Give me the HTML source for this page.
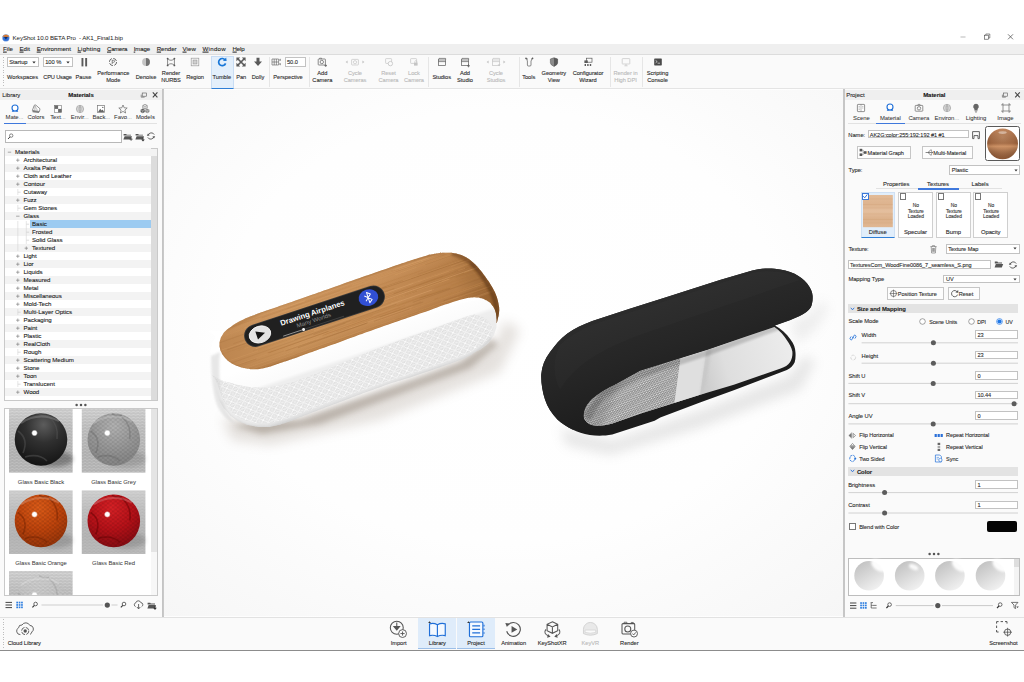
<!DOCTYPE html>
<html lang="en"><head><meta charset="utf-8"><title>KeyShot 10.0 BETA Pro - AK1_Final1.bip</title>
<style>
html,body{margin:0;padding:0;background:#fff;}
body{width:1024px;height:682px;overflow:hidden;position:relative;font-family:"Liberation Sans",sans-serif;font-size:5.7px;color:#2b2b2b;}
.b{position:absolute;box-sizing:border-box;}
.t{position:absolute;white-space:nowrap;line-height:6.8px;text-align:center;letter-spacing:-0.05px;-webkit-text-stroke:0.1px currentColor;}
.g{color:#b9b9b9;}
.bold{font-weight:bold;}
svg{overflow:visible;}
</style></head>
<body>
<!-- title bar -->
<svg class="b" style="left:1.6px;top:33.7px;" width="7.8" height="7.8" viewBox="0 0 9 9">
<circle cx="4.5" cy="4.5" r="4" fill="#2f6fd6"/>
<path d="M0.6 3.6 A4 4 0 0 1 8.4 3.6 L6.6 3.2 L2.4 3.2 Z" fill="#e8791d"/>
<path d="M2.4 3.4 L6.6 3.4 L4.5 6.4 Z" fill="#1b2a55"/>
<circle cx="4.5" cy="4.5" r="4" fill="none" stroke="#9bb8e8" stroke-width="0.4"/>
</svg>
<div class="t " style="left:12.6px;top:37.8px;transform:translate(0,-50%);font-size:6.2px;letter-spacing:-0.109px;color:#1a1a1a;-webkit-text-stroke:0;">KeyShot 10.0 BETA Pro&nbsp; - AK1_Final1.bip</div>
<svg class="b" style="left:958px;top:32px;" width="60" height="10" viewBox="0 0 60 10">
<path d="M2.5 5 H7.5" stroke="#8a8a8a" stroke-width="0.6" fill="none"/>
<rect x="26.5" y="3.2" width="4" height="4" fill="#fff" stroke="#444" stroke-width="0.6"/>
<path d="M27.8 3.2 V2 H31.8 V6 H30.6" fill="none" stroke="#444" stroke-width="0.6"/>
<path d="M50 2.3 L55 7.3 M55 2.3 L50 7.3" stroke="#444" stroke-width="0.7" fill="none"/>
</svg>
<!-- menu bar -->
<div class="b" style="left:0px;top:44px;width:1024px;height:11px;background:#efefef;border-bottom:1px solid #dcdcdc;"></div>
<div class="t " style="left:3px;top:49.2px;transform:translate(0,-50%);font-size:6.1px;letter-spacing:0.043px;color:#222;"><u>F</u>ile</div>
<div class="t " style="left:19.5px;top:49.2px;transform:translate(0,-50%);font-size:6.1px;letter-spacing:-0.003px;color:#222;"><u>E</u>dit</div>
<div class="t " style="left:36.7px;top:49.2px;transform:translate(0,-50%);font-size:6.1px;letter-spacing:0.005px;color:#222;"><u>E</u>nvironment</div>
<div class="t " style="left:77.5px;top:49.2px;transform:translate(0,-50%);font-size:6.1px;letter-spacing:0.204px;color:#222;"><u>L</u>ighting</div>
<div class="t " style="left:107px;top:49.2px;transform:translate(0,-50%);font-size:6.1px;letter-spacing:-0.283px;color:#222;"><u>C</u>amera</div>
<div class="t " style="left:133.7px;top:49.2px;transform:translate(0,-50%);font-size:6.1px;letter-spacing:-0.131px;color:#222;"><u>I</u>mage</div>
<div class="t " style="left:156.7px;top:49.2px;transform:translate(0,-50%);font-size:6.1px;letter-spacing:-0.034px;color:#222;"><u>R</u>ender</div>
<div class="t " style="left:182.5px;top:49.2px;transform:translate(0,-50%);font-size:6.1px;letter-spacing:0.097px;color:#222;"><u>V</u>iew</div>
<div class="t " style="left:202.5px;top:49.2px;transform:translate(0,-50%);font-size:6.1px;letter-spacing:0.301px;color:#222;"><u>W</u>indow</div>
<div class="t " style="left:232.5px;top:49.2px;transform:translate(0,-50%);font-size:6.1px;letter-spacing:-0.136px;color:#222;"><u>H</u>elp</div>
<!-- toolbar -->
<div class="b" style="left:0px;top:55px;width:1024px;height:34px;background:#fafafa;border-bottom:1px solid #e4e4e4;"></div>
<div class="b" style="left:2.5px;top:57px;width:1px;height:30px;background:repeating-linear-gradient(to bottom,#bdbdbd 0,#bdbdbd 1px,transparent 1px,transparent 2.5px);"></div>
<div class="b" style="left:7px;top:57px;width:31.5px;height:10px;background:#fff;border:1px solid #c2c2c2;"></div><div class="t " style="left:9.2px;top:62.2px;transform:translate(0,-50%);font-size:5.8px;">Startup</div><svg class="b" style="left:32.0px;top:60.8px;" width="4" height="3" viewBox="0 0 4 3"><path d="M0.3 0.4 H3.7 L2 2.6 Z" fill="#333"/></svg>
<div class="b" style="left:43px;top:57px;width:29.5px;height:10px;background:#fff;border:1px solid #c2c2c2;"></div><div class="t " style="left:45.2px;top:62.2px;transform:translate(0,-50%);font-size:5.8px;">100 %</div><svg class="b" style="left:66.0px;top:60.8px;" width="4" height="3" viewBox="0 0 4 3"><path d="M0.3 0.4 H3.7 L2 2.6 Z" fill="#333"/></svg>
<div class="t " style="left:22.5px;top:77.3px;transform:translate(-50%,-50%);font-size:5.7px;letter-spacing:-0.026px;">Workspaces</div>
<div class="t " style="left:57.5px;top:77.3px;transform:translate(-50%,-50%);font-size:5.7px;letter-spacing:-0.177px;">CPU Usage</div>
<svg class="b" style="left:77.5px;top:56px;" width="12" height="12" viewBox="0 0 12 12"><rect x="3.5" y="2" width="1.9" height="8.4" fill="#5a5a5a"/><rect x="7.2" y="2" width="1.9" height="8.4" fill="#5a5a5a"/></svg><div class="t " style="left:83.5px;top:77.0px;transform:translate(-50%,-50%);">Pause</div>
<svg class="b" style="left:107.3px;top:56px;" width="12" height="12" viewBox="0 0 12 12"><circle cx="6" cy="6" r="3.6" fill="none" stroke="#5a5a5a" stroke-width="0.9" stroke-dasharray="4.2 1.4"/><path d="M5 4.3 H6.6 A1 1 0 0 1 6.6 6.3 H5.3 M5.2 4.3 V8" fill="none" stroke="#5a5a5a" stroke-width="0.7"/></svg><div class="t " style="left:113.3px;top:73.4px;transform:translate(-50%,-50%);">Performance</div><div class="t " style="left:113.3px;top:80.1px;transform:translate(-50%,-50%);">Mode</div>
<svg class="b" style="left:140px;top:56px;" width="12" height="12" viewBox="0 0 12 12"><circle cx="6" cy="6" r="3.9" fill="#c4c4c4"/><path d="M6 2.1 A3.9 3.9 0 0 1 6 9.9 Z" fill="#727272"/></svg><div class="t " style="left:146px;top:77.0px;transform:translate(-50%,-50%);">Denoise</div>
<svg class="b" style="left:165px;top:56px;" width="12" height="12" viewBox="0 0 12 12"><path d="M2.6 2.6 Q6 6 9.4 2.6 M2.6 9.4 Q6 6 9.4 9.4 M2.6 2.6 V9.4 M9.4 2.6 V9.4" fill="none" stroke="#5a5a5a" stroke-width="0.7"/><circle cx="2.6" cy="2.6" r="0.9" fill="#5a5a5a"/><circle cx="9.4" cy="2.6" r="0.9" fill="#5a5a5a"/><circle cx="2.6" cy="9.4" r="0.9" fill="#5a5a5a"/><circle cx="9.4" cy="9.4" r="0.9" fill="#5a5a5a"/></svg><div class="t " style="left:171px;top:73.4px;transform:translate(-50%,-50%);">Render</div><div class="t " style="left:171px;top:80.1px;transform:translate(-50%,-50%);">NURBS</div>
<svg class="b" style="left:189px;top:56px;" width="12" height="12" viewBox="0 0 12 12"><rect x="2.2" y="2.2" width="7.6" height="7.6" fill="none" stroke="#9a9a9a" stroke-width="0.7"/><rect x="4" y="4" width="4" height="4" fill="#cfcfcf" stroke="#8a8a8a" stroke-width="0.5"/></svg><div class="t " style="left:195px;top:77.0px;transform:translate(-50%,-50%);">Region</div>
<div class="b" style="left:210.5px;top:56px;width:23.2px;height:32.5px;background:#e3effb;border:0.8px solid #c9ddf4;border-bottom:1.3px solid #2f7fd6;"></div>
<svg class="b" style="left:215.8px;top:56px;" width="12" height="12" viewBox="0 0 12 12"><path d="M9.3 4.2 A3.6 3.6 0 1 0 9.6 7.4" fill="none" stroke="#1877d8" stroke-width="1.7"/><path d="M6.9 4.7 L10.6 4.9 L10.2 1.4 Z" fill="#1877d8"/></svg><div class="t " style="left:221.8px;top:77.0px;transform:translate(-50%,-50%);">Tumble</div>
<svg class="b" style="left:235.2px;top:56px;" width="12" height="12" viewBox="0 0 12 12"><path d="M3 3 L9 9 M9 3 L3 9" stroke="#5a5a5a" stroke-width="1.7"/><path d="M1.4 1.4 H5.2 L1.4 5.2 Z M10.6 1.4 V5.2 L6.8 1.4 Z M1.4 10.6 V6.8 L5.2 10.6 Z M10.6 10.6 H6.8 L10.6 6.8 Z" fill="#5a5a5a"/></svg><div class="t " style="left:241.2px;top:77.0px;transform:translate(-50%,-50%);">Pan</div>
<svg class="b" style="left:252px;top:56px;" width="12" height="12" viewBox="0 0 12 12"><path d="M4.5 1.8 H7.5 V5.6 H10 L6 10 L2 5.6 H4.5 Z" fill="#5a5a5a"/></svg><div class="t " style="left:258px;top:77.0px;transform:translate(-50%,-50%);">Dolly</div>
<div class="b" style="left:269px;top:57px;width:1px;height:30px;background:#e6e6e6;"></div>
<svg class="b" style="left:270px;top:56px;" width="12" height="12" viewBox="0 0 12 12"><path d="M2 3 H8.6 V9 H2 Z M2 6 H8.6 M4.2 3 V9 M6.4 3 V9" fill="none" stroke="#5a5a5a" stroke-width="0.6"/><path d="M9.2 7.6 H11 L10.1 9.4 Z M9.2 4.4 H11 L10.1 2.6 Z" fill="#5a5a5a"/></svg>
<div class="b" style="left:285px;top:57.3px;width:21.3px;height:9.6px;background:#fff;border:1px solid #c2c2c2;"></div>
<div class="t " style="left:287px;top:62.3px;transform:translate(0,-50%);">50.0</div>
<div class="t " style="left:288px;top:77.3px;transform:translate(-50%,-50%);font-size:5.7px;letter-spacing:-0.025px;">Perspective</div>
<div class="b" style="left:308.5px;top:57px;width:1px;height:30px;background:#e6e6e6;"></div>
<svg class="b" style="left:316.3px;top:56px;" width="12" height="12" viewBox="0 0 12 12"><rect x="2.2" y="3" width="7.2" height="6" rx="0.6" fill="none" stroke="#5a5a5a" stroke-width="0.7"/><circle cx="5.8" cy="6" r="1.7" fill="none" stroke="#5a5a5a" stroke-width="0.7"/><path d="M3.6 3 V2.2 H5.6 V3" fill="none" stroke="#5a5a5a" stroke-width="0.6"/><path d="M8.4 9.6 H11 M9.7 8.3 V10.9" stroke="#5a5a5a" stroke-width="0.8"/></svg><div class="t " style="left:322.3px;top:73.4px;transform:translate(-50%,-50%);">Add</div><div class="t " style="left:322.3px;top:80.1px;transform:translate(-50%,-50%);">Camera</div>
<svg class="b" style="left:349px;top:56px;" width="12" height="12" viewBox="0 0 12 12"><rect x="2.6" y="3.4" width="6.8" height="5.6" rx="0.6" fill="none" stroke="#c4c4c4" stroke-width="0.7"/><circle cx="6" cy="6.2" r="1.6" fill="none" stroke="#c4c4c4" stroke-width="0.7"/><path d="M-3.4 6 L-1.4 4.6 V7.4 Z M15.4 6 L13.4 4.6 V7.4 Z" fill="#c4c4c4"/></svg><div class="t g" style="left:355px;top:73.4px;transform:translate(-50%,-50%);">Cycle</div><div class="t g" style="left:355px;top:80.1px;transform:translate(-50%,-50%);">Cameras</div>
<svg class="b" style="left:382.5px;top:56px;" width="12" height="12" viewBox="0 0 12 12"><rect x="2.6" y="2.6" width="6" height="4.8" rx="0.6" fill="none" stroke="#c4c4c4" stroke-width="0.7"/><circle cx="7.4" cy="7.6" r="2.2" fill="#fafafa" stroke="#c4c4c4" stroke-width="0.8"/></svg><div class="t g" style="left:388.5px;top:73.4px;transform:translate(-50%,-50%);">Reset</div><div class="t g" style="left:388.5px;top:80.1px;transform:translate(-50%,-50%);">Camera</div>
<svg class="b" style="left:408px;top:56px;" width="12" height="12" viewBox="0 0 12 12"><rect x="2.6" y="2.6" width="6" height="4.8" rx="0.6" fill="none" stroke="#c4c4c4" stroke-width="0.7"/><rect x="6" y="6.6" width="3.6" height="3" fill="#c4c4c4"/><path d="M6.8 6.6 V5.6 A1 1 0 0 1 8.8 5.6 V6.6" fill="none" stroke="#c4c4c4" stroke-width="0.6"/></svg><div class="t g" style="left:414px;top:73.4px;transform:translate(-50%,-50%);">Lock</div><div class="t g" style="left:414px;top:80.1px;transform:translate(-50%,-50%);">Camera</div>
<div class="b" style="left:428px;top:57px;width:1px;height:30px;background:#e6e6e6;"></div>
<svg class="b" style="left:435.7px;top:56px;" width="12" height="12" viewBox="0 0 12 12"><rect x="2.4" y="4" width="7.2" height="5.6" fill="none" stroke="#5a5a5a" stroke-width="0.7"/><path d="M2.4 4 L3 2.4 L9.6 2.4 L9.6 4 M2.4 5.6 H9.6" fill="none" stroke="#5a5a5a" stroke-width="0.7"/></svg><div class="t " style="left:441.7px;top:77.0px;transform:translate(-50%,-50%);">Studios</div>
<svg class="b" style="left:459px;top:56px;" width="12" height="12" viewBox="0 0 12 12"><rect x="2.4" y="4" width="7.2" height="5.6" fill="none" stroke="#5a5a5a" stroke-width="0.7"/><path d="M2.4 4 L3 2.4 L9.6 2.4 L9.6 4 M2.4 5.6 H9.6" fill="none" stroke="#5a5a5a" stroke-width="0.7"/><path d="M8 9.8 H11 M9.5 8.3 V11.3" stroke="#5a5a5a" stroke-width="0.8"/></svg><div class="t " style="left:465px;top:73.4px;transform:translate(-50%,-50%);">Add</div><div class="t " style="left:465px;top:80.1px;transform:translate(-50%,-50%);">Studio</div>
<svg class="b" style="left:490px;top:56px;" width="12" height="12" viewBox="0 0 12 12"><rect x="2.4" y="4" width="7.2" height="5.6" fill="none" stroke="#c4c4c4" stroke-width="0.7"/><path d="M2.4 4 L3 2.4 L9.6 2.4 L9.6 4 M2.4 5.6 H9.6" fill="none" stroke="#c4c4c4" stroke-width="0.7"/><path d="M-3.4 6 L-1.4 4.6 V7.4 Z M15.4 6 L13.4 4.6 V7.4 Z" fill="#c4c4c4"/><path d="M7.6 8.4 H10.6 L9.1 10.2 Z" fill="#c4c4c4"/></svg><div class="t g" style="left:496px;top:73.4px;transform:translate(-50%,-50%);">Cycle</div><div class="t g" style="left:496px;top:80.1px;transform:translate(-50%,-50%);">Studios</div>
<div class="b" style="left:518.5px;top:57px;width:1px;height:30px;background:#e6e6e6;"></div>
<svg class="b" style="left:522.7px;top:56px;" width="12" height="12" viewBox="0 0 12 12"><path d="M3.4 2.6 L4.4 5 V9 A1 1 0 0 0 5.4 10 H7 A1 1 0 0 0 8 9 V5 L9.4 2.6 M3 2.4 L5 3.2 M9.8 2.2 L8 3.2" fill="none" stroke="#5a5a5a" stroke-width="0.7"/><circle cx="3" cy="2.4" r="0.8" fill="#5a5a5a"/><circle cx="9.6" cy="2.4" r="0.8" fill="#5a5a5a"/></svg><div class="t " style="left:528.7px;top:77.0px;transform:translate(-50%,-50%);">Tools</div>
<svg class="b" style="left:547.8px;top:56px;" width="12" height="12" viewBox="0 0 12 12"><path d="M6 1.8 L9.6 3 V6.6 Q9.6 9 6 10.4 Q2.4 9 2.4 6.6 V3 Z" fill="#8c8c8c" stroke="#5a5a5a" stroke-width="0.6"/><path d="M6 1.8 L9.6 3 V6.6 Q9.6 9 6 10.4 Z" fill="#5a5a5a"/></svg><div class="t " style="left:553.8px;top:73.4px;transform:translate(-50%,-50%);">Geometry</div><div class="t " style="left:553.8px;top:80.1px;transform:translate(-50%,-50%);">View</div>
<svg class="b" style="left:582px;top:56px;" width="12" height="12" viewBox="0 0 12 12"><rect x="4.6" y="2.2" width="5.4" height="4" fill="none" stroke="#5a5a5a" stroke-width="0.7"/><rect x="2.4" y="4.4" width="3.4" height="2.6" fill="#5a5a5a"/><path d="M2.6 8 H4 V10 H2.6 Z M5.2 8 H6.6 V10 H5.2 Z M7.8 8 H9.2 V10 H7.8 Z" fill="#5a5a5a"/></svg><div class="t " style="left:588px;top:73.4px;transform:translate(-50%,-50%);">Configurator</div><div class="t " style="left:588px;top:80.1px;transform:translate(-50%,-50%);">Wizard</div>
<div class="b" style="left:610px;top:57px;width:1px;height:30px;background:#e6e6e6;"></div>
<svg class="b" style="left:619.5px;top:56px;" width="12" height="12" viewBox="0 0 12 12"><rect x="2.2" y="2.6" width="7.6" height="5.4" rx="0.5" fill="none" stroke="#c4c4c4" stroke-width="0.7"/><path d="M4.4 9.8 H7.6 M6 8 V9.8" stroke="#c4c4c4" stroke-width="0.7"/></svg><div class="t g" style="left:625.5px;top:73.4px;transform:translate(-50%,-50%);">Render in</div><div class="t g" style="left:625.5px;top:80.1px;transform:translate(-50%,-50%);">High DPI</div>
<div class="b" style="left:642px;top:57px;width:1px;height:30px;background:#e6e6e6;"></div>
<svg class="b" style="left:651.5px;top:56px;" width="12" height="12" viewBox="0 0 12 12"><rect x="2.2" y="2.4" width="7.6" height="7" rx="0.6" fill="#4a4a4a"/><path d="M3.6 4.4 L5.2 5.6 L3.6 6.8 M5.6 7.2 H8" stroke="#fff" stroke-width="0.6" fill="none"/></svg><div class="t " style="left:657.5px;top:73.4px;transform:translate(-50%,-50%);">Scripting</div><div class="t " style="left:657.5px;top:80.1px;transform:translate(-50%,-50%);">Console</div>
<!-- library panel -->
<div class="b" style="left:0px;top:89px;width:162px;height:528px;background:#fafafa;"></div>
<div class="b" style="left:161.5px;top:89px;width:2.2px;height:528px;background:#c4c4c4;"></div>
<div class="b" style="left:0px;top:89.5px;width:161.5px;height:10.5px;background:#efefef;"></div>
<div class="t " style="left:2.3px;top:95.2px;transform:translate(0,-50%);font-size:6px;">Library</div>
<div class="t bold" style="left:81px;top:95.2px;transform:translate(-50%,-50%);font-size:6px;color:#111;">Materials</div>
<svg class="b" style="left:140px;top:90px;" width="20" height="10" viewBox="0 0 20 10">
<rect x="2.2" y="3" width="4.2" height="3.2" fill="none" stroke="#555" stroke-width="0.6"/>
<path d="M1.2 4.6 V7.2 H4.6" fill="none" stroke="#555" stroke-width="0.6"/>
<path d="M12.8 2.4 L17.4 7.4 M17.4 2.4 L12.8 7.4" stroke="#444" stroke-width="1.1" fill="none"/>
</svg>
<svg class="b" style="left:8.5px;top:102.6px;" width="12" height="12" viewBox="0 0 12 12"><circle cx="6" cy="5" r="3" fill="#fff" stroke="#1f6fd8" stroke-width="1.1"/><path d="M3.2 7.6 Q6 9.2 8.8 7.6 L9.2 8.8 H2.8 Z" fill="#1f6fd8"/></svg>
<div class="t " style="left:14.5px;top:117.4px;transform:translate(-50%,-50%);font-size:5.95px;-webkit-text-stroke:0.04px currentColor;color:#333;">Mate<span style="color:#999">...</span></div>
<svg class="b" style="left:29.9px;top:102.6px;" width="12" height="12" viewBox="0 0 12 12"><path d="M2.4 7.4 L4.2 2.4 Q4.9 1.5 5.8 2.1 L10 5.8 L9.4 8.6 Z" fill="#fff" stroke="#666" stroke-width="0.7"/><path d="M2.4 7.4 L9.4 8.6 L8.8 10 L2.6 9.2 Z" fill="#7c7c7c"/><path d="M4.8 2.4 L4.4 7.7 M4.8 2.4 L6.4 8 M4.8 2.4 L8.2 8.3" stroke="#999" stroke-width="0.45"/></svg>
<div class="t " style="left:35.9px;top:117.4px;transform:translate(-50%,-50%);font-size:5.95px;-webkit-text-stroke:0.04px currentColor;color:#333;">Colors</div>
<svg class="b" style="left:51.9px;top:102.6px;" width="12" height="12" viewBox="0 0 12 12"><rect x="2.6" y="2.4" width="7" height="7" fill="#fff" stroke="#777" stroke-width="0.6"/><rect x="2.6" y="2.4" width="3.5" height="3.5" fill="#6a6a6a"/><rect x="6.1" y="5.9" width="3.5" height="3.5" fill="#6a6a6a"/></svg>
<div class="t " style="left:57.9px;top:117.4px;transform:translate(-50%,-50%);font-size:5.95px;-webkit-text-stroke:0.04px currentColor;color:#333;">Text<span style="color:#999">...</span></div>
<svg class="b" style="left:73.7px;top:102.6px;" width="12" height="12" viewBox="0 0 12 12"><circle cx="6" cy="6" r="3.7" fill="#e6e6e6" stroke="#9a9a9a" stroke-width="0.6"/><path d="M2.4 6 H9.6 M3 4.2 H9 M3 7.8 H9 M6 2.3 V9.7 M6 2.3 Q3.6 6 6 9.7 M6 2.3 Q8.4 6 6 9.7" fill="none" stroke="#9a9a9a" stroke-width="0.45"/></svg>
<div class="t " style="left:79.7px;top:117.4px;transform:translate(-50%,-50%);font-size:5.95px;-webkit-text-stroke:0.04px currentColor;color:#333;">Envir<span style="color:#999">...</span></div>
<svg class="b" style="left:95.3px;top:102.6px;" width="12" height="12" viewBox="0 0 12 12"><rect x="2.4" y="2.6" width="7.2" height="6.8" fill="#fff" stroke="#777" stroke-width="0.7"/><path d="M3 9 L5.2 5.8 L6.6 7.6 L7.6 6.6 L9.2 9 Z" fill="#666"/><circle cx="7.8" cy="4.4" r="0.7" fill="#666"/></svg>
<div class="t " style="left:101.3px;top:117.4px;transform:translate(-50%,-50%);font-size:5.95px;-webkit-text-stroke:0.04px currentColor;color:#333;">Back<span style="color:#999">...</span></div>
<svg class="b" style="left:117px;top:102.6px;" width="12" height="12" viewBox="0 0 12 12"><path d="M6 2 L7.2 4.8 L10.2 5 L7.9 7 L8.6 10 L6 8.4 L3.4 10 L4.1 7 L1.8 5 L4.8 4.8 Z" fill="none" stroke="#666" stroke-width="0.7"/></svg>
<div class="t " style="left:123px;top:117.4px;transform:translate(-50%,-50%);font-size:5.95px;-webkit-text-stroke:0.04px currentColor;color:#333;">Favo<span style="color:#999">...</span></div>
<svg class="b" style="left:139.4px;top:102.6px;" width="12" height="12" viewBox="0 0 12 12"><path d="M6 1.4 L8.2 2.5 V4.9 L6 6 L3.8 4.9 V2.5 Z" fill="#f2f2f2" stroke="#666" stroke-width="0.6"/><path d="M3.8 2.5 L6 3.6 L8.2 2.5 M6 3.6 V6" fill="none" stroke="#777" stroke-width="0.45"/><path d="M3.7 5.6 L5.8 6.7 V9.1 L3.7 10.2 L1.6 9.1 V6.7 Z" fill="#5e5e5e"/><path d="M8.3 5.6 L10.4 6.7 V9.1 L8.3 10.2 L6.2 9.1 V6.7 Z" fill="#8c8c8c"/><path d="M1.6 6.7 L3.7 7.8 L5.8 6.7 M3.7 7.8 V10.2 M6.2 6.7 L8.3 7.8 L10.4 6.7 M8.3 7.8 V10.2" fill="none" stroke="#e8e8e8" stroke-width="0.4"/></svg>
<div class="t " style="left:145.4px;top:117.4px;transform:translate(-50%,-50%);font-size:5.95px;-webkit-text-stroke:0.04px currentColor;color:#333;">Models</div>
<div class="b" style="left:4px;top:122.6px;width:152.5px;height:1.1px;background:#e2e2e2;"></div>
<div class="b" style="left:4px;top:122.5px;width:21.7px;height:1.3px;background:#3f78dc;"></div>
<div class="b" style="left:5.2px;top:130.3px;width:116.5px;height:12.3px;background:#fff;border:1px solid #b8b8b8;"></div>
<svg class="b" style="left:7px;top:132.8px;" width="7" height="7" viewBox="0 0 7 7"><circle cx="4.2" cy="2.6" r="1.7" fill="#fff" stroke="#555" stroke-width="0.7"/><path d="M3 3.9 L1 6" stroke="#444" stroke-width="1"/></svg>
<svg class="b" style="left:123.2px;top:131.6px;" width="10" height="10" viewBox="0 0 10 10"><path d="M0.6 2 H3.2 L3.8 2.8 H8 V3.6 H0.6 Z" fill="#555"/><path d="M1.6 4.2 H9 L7.6 7.6 H0.4 Z" fill="#555"/><path d="M6.6 7.2 H9.6 M8.1 5.8 V8.8" stroke="#444" stroke-width="0.8"/></svg>
<svg class="b" style="left:134.7px;top:131.6px;" width="10" height="10" viewBox="0 0 10 10"><path d="M0.6 2 H3.2 L3.8 2.8 H8 V3.6 H0.6 Z" fill="#555"/><path d="M1.6 4.2 H9 L7.6 7.6 H0.4 Z" fill="#555"/><path d="M6.2 7.4 H9.8 L8 9.6 Z" fill="#333"/><path d="M8 5.4 V8" stroke="#333" stroke-width="0.9"/></svg>
<svg class="b" style="left:146px;top:131.2px;" width="10" height="10" viewBox="0 0 10 10"><path d="M8.2 3.6 A3.2 3.2 0 0 0 2.2 4.4 M1.8 6.4 A3.2 3.2 0 0 0 7.8 5.6" fill="none" stroke="#555" stroke-width="0.9"/><path d="M0.8 4.8 L3.6 4.6 L2 2.6 Z M9.2 5.2 L6.4 5.4 L8 7.4 Z" fill="#555"/></svg>
<div class="b" style="left:4.4px;top:147.5px;width:153.5px;height:253.5px;background:#fff;border:1px solid #c9c9c9;"></div>
<div class="b" style="left:5.4px;top:148.2px;width:145.8px;height:8px;background:#f3f3f3;"></div><div class="t " style="left:15px;top:152.29999999999998px;transform:translate(0,-50%);font-size:6.15px;color:#222;">Materials</div><div class="t " style="left:23.5px;top:160.29999999999998px;transform:translate(0,-50%);font-size:6.15px;color:#222;">Architectural</div><div class="b" style="left:5.4px;top:164.2px;width:145.8px;height:8px;background:#f3f3f3;"></div><div class="t " style="left:23.5px;top:168.29999999999998px;transform:translate(0,-50%);font-size:6.15px;color:#222;">Axalta Paint</div><div class="t " style="left:23.5px;top:176.29999999999998px;transform:translate(0,-50%);font-size:6.15px;color:#222;">Cloth and Leather</div><div class="b" style="left:5.4px;top:180.2px;width:145.8px;height:8px;background:#f3f3f3;"></div><div class="t " style="left:23.5px;top:184.29999999999998px;transform:translate(0,-50%);font-size:6.15px;color:#222;">Contour</div><div class="t " style="left:23.5px;top:192.29999999999998px;transform:translate(0,-50%);font-size:6.15px;color:#222;">Cutaway</div><div class="b" style="left:5.4px;top:196.2px;width:145.8px;height:8px;background:#f3f3f3;"></div><div class="t " style="left:23.5px;top:200.29999999999998px;transform:translate(0,-50%);font-size:6.15px;color:#222;">Fuzz</div><div class="t " style="left:23.5px;top:208.29999999999998px;transform:translate(0,-50%);font-size:6.15px;color:#222;">Gem Stones</div><div class="b" style="left:5.4px;top:212.2px;width:145.8px;height:8px;background:#f3f3f3;"></div><div class="t " style="left:23.5px;top:216.29999999999998px;transform:translate(0,-50%);font-size:6.15px;color:#222;">Glass</div><div class="b" style="left:30.4px;top:220.29999999999998px;width:120.8px;height:7.8px;background:#9ccbf1;"></div><div class="t " style="left:32px;top:224.29999999999998px;transform:translate(0,-50%);font-size:6.15px;color:#222;">Basic</div><div class="b" style="left:5.4px;top:228.2px;width:145.8px;height:8px;background:#f3f3f3;"></div><div class="t " style="left:32px;top:232.29999999999998px;transform:translate(0,-50%);font-size:6.15px;color:#222;">Frosted</div><div class="t " style="left:32px;top:240.29999999999998px;transform:translate(0,-50%);font-size:6.15px;color:#222;">Solid Glass</div><div class="b" style="left:5.4px;top:244.2px;width:145.8px;height:8px;background:#f3f3f3;"></div><div class="t " style="left:32px;top:248.29999999999998px;transform:translate(0,-50%);font-size:6.15px;color:#222;">Textured</div><div class="t " style="left:23.5px;top:256.3px;transform:translate(0,-50%);font-size:6.15px;color:#222;">Light</div><div class="b" style="left:5.4px;top:260.2px;width:145.8px;height:8px;background:#f3f3f3;"></div><div class="t " style="left:23.5px;top:264.3px;transform:translate(0,-50%);font-size:6.15px;color:#222;">Lior</div><div class="t " style="left:23.5px;top:272.3px;transform:translate(0,-50%);font-size:6.15px;color:#222;">Liquids</div><div class="b" style="left:5.4px;top:276.2px;width:145.8px;height:8px;background:#f3f3f3;"></div><div class="t " style="left:23.5px;top:280.3px;transform:translate(0,-50%);font-size:6.15px;color:#222;">Measured</div><div class="t " style="left:23.5px;top:288.3px;transform:translate(0,-50%);font-size:6.15px;color:#222;">Metal</div><div class="b" style="left:5.4px;top:292.2px;width:145.8px;height:8px;background:#f3f3f3;"></div><div class="t " style="left:23.5px;top:296.3px;transform:translate(0,-50%);font-size:6.15px;color:#222;">Miscellaneous</div><div class="t " style="left:23.5px;top:304.3px;transform:translate(0,-50%);font-size:6.15px;color:#222;">Mold-Tech</div><div class="b" style="left:5.4px;top:308.2px;width:145.8px;height:8px;background:#f3f3f3;"></div><div class="t " style="left:23.5px;top:312.3px;transform:translate(0,-50%);font-size:6.15px;color:#222;">Multi-Layer Optics</div><div class="t " style="left:23.5px;top:320.3px;transform:translate(0,-50%);font-size:6.15px;color:#222;">Packaging</div><div class="b" style="left:5.4px;top:324.2px;width:145.8px;height:8px;background:#f3f3f3;"></div><div class="t " style="left:23.5px;top:328.3px;transform:translate(0,-50%);font-size:6.15px;color:#222;">Paint</div><div class="t " style="left:23.5px;top:336.3px;transform:translate(0,-50%);font-size:6.15px;color:#222;">Plastic</div><div class="b" style="left:5.4px;top:340.2px;width:145.8px;height:8px;background:#f3f3f3;"></div><div class="t " style="left:23.5px;top:344.3px;transform:translate(0,-50%);font-size:6.15px;color:#222;">RealCloth</div><div class="t " style="left:23.5px;top:352.3px;transform:translate(0,-50%);font-size:6.15px;color:#222;">Rough</div><div class="b" style="left:5.4px;top:356.2px;width:145.8px;height:8px;background:#f3f3f3;"></div><div class="t " style="left:23.5px;top:360.3px;transform:translate(0,-50%);font-size:6.15px;color:#222;">Scattering Medium</div><div class="t " style="left:23.5px;top:368.3px;transform:translate(0,-50%);font-size:6.15px;color:#222;">Stone</div><div class="b" style="left:5.4px;top:372.2px;width:145.8px;height:8px;background:#f3f3f3;"></div><div class="t " style="left:23.5px;top:376.3px;transform:translate(0,-50%);font-size:6.15px;color:#222;">Toon</div><div class="t " style="left:23.5px;top:384.3px;transform:translate(0,-50%);font-size:6.15px;color:#222;">Translucent</div><div class="b" style="left:5.4px;top:388.2px;width:145.8px;height:8px;background:#f3f3f3;"></div><div class="t " style="left:23.5px;top:392.3px;transform:translate(0,-50%);font-size:6.15px;color:#222;">Wood</div>
<svg class="b" style="left:0px;top:0px;" width="162" height="410" viewBox="0 0 162 410"><path d="M7.8 152.2 H11.2" stroke="#808080" stroke-width="0.65"/><path d="M16.1 160.2 H19.5 M17.8 158.5 V161.89999999999998" stroke="#808080" stroke-width="0.65"/><path d="M16.1 168.2 H19.5 M17.8 166.5 V169.89999999999998" stroke="#808080" stroke-width="0.65"/><path d="M16.1 176.2 H19.5 M17.8 174.5 V177.89999999999998" stroke="#808080" stroke-width="0.65"/><path d="M16.1 184.2 H19.5 M17.8 182.5 V185.89999999999998" stroke="#808080" stroke-width="0.65"/><path d="M17.8 192.2 H20.6" stroke="#bdbdbd" stroke-width="0.5"/><path d="M16.1 200.2 H19.5 M17.8 198.5 V201.89999999999998" stroke="#808080" stroke-width="0.65"/><path d="M17.8 208.2 H20.6" stroke="#bdbdbd" stroke-width="0.5"/><path d="M16.1 216.2 H19.5" stroke="#808080" stroke-width="0.65"/><path d="M26.3 224.2 H29.1" stroke="#bdbdbd" stroke-width="0.5"/><path d="M26.3 232.2 H29.1" stroke="#bdbdbd" stroke-width="0.5"/><path d="M26.3 240.2 H29.1" stroke="#bdbdbd" stroke-width="0.5"/><path d="M24.6 248.2 H28.0 M26.3 246.5 V249.89999999999998" stroke="#808080" stroke-width="0.65"/><path d="M16.1 256.2 H19.5 M17.8 254.5 V257.9" stroke="#808080" stroke-width="0.65"/><path d="M16.1 264.2 H19.5 M17.8 262.5 V265.9" stroke="#808080" stroke-width="0.65"/><path d="M16.1 272.2 H19.5 M17.8 270.5 V273.9" stroke="#808080" stroke-width="0.65"/><path d="M16.1 280.2 H19.5 M17.8 278.5 V281.9" stroke="#808080" stroke-width="0.65"/><path d="M16.1 288.2 H19.5 M17.8 286.5 V289.9" stroke="#808080" stroke-width="0.65"/><path d="M16.1 296.2 H19.5 M17.8 294.5 V297.9" stroke="#808080" stroke-width="0.65"/><path d="M16.1 304.2 H19.5 M17.8 302.5 V305.9" stroke="#808080" stroke-width="0.65"/><path d="M17.8 312.2 H20.6" stroke="#bdbdbd" stroke-width="0.5"/><path d="M16.1 320.2 H19.5 M17.8 318.5 V321.9" stroke="#808080" stroke-width="0.65"/><path d="M16.1 328.2 H19.5 M17.8 326.5 V329.9" stroke="#808080" stroke-width="0.65"/><path d="M16.1 336.2 H19.5 M17.8 334.5 V337.9" stroke="#808080" stroke-width="0.65"/><path d="M16.1 344.2 H19.5 M17.8 342.5 V345.9" stroke="#808080" stroke-width="0.65"/><path d="M17.8 352.2 H20.6" stroke="#bdbdbd" stroke-width="0.5"/><path d="M16.1 360.2 H19.5 M17.8 358.5 V361.9" stroke="#808080" stroke-width="0.65"/><path d="M16.1 368.2 H19.5 M17.8 366.5 V369.9" stroke="#808080" stroke-width="0.65"/><path d="M16.1 376.2 H19.5 M17.8 374.5 V377.9" stroke="#808080" stroke-width="0.65"/><path d="M17.8 384.2 H20.6" stroke="#bdbdbd" stroke-width="0.5"/><path d="M16.1 392.2 H19.5 M17.8 390.5 V393.9" stroke="#808080" stroke-width="0.65"/><path d="M17.8 189 V195" stroke="#cfcfcf" stroke-width="0.5"/><path d="M17.8 205 V211" stroke="#cfcfcf" stroke-width="0.5"/><path d="M17.8 221 V251" stroke="#cfcfcf" stroke-width="0.5"/><path d="M26.3 221 V244" stroke="#cfcfcf" stroke-width="0.5"/><path d="M17.8 309 V315" stroke="#cfcfcf" stroke-width="0.5"/><path d="M17.8 349 V355" stroke="#cfcfcf" stroke-width="0.5"/><path d="M17.8 381 V387" stroke="#cfcfcf" stroke-width="0.5"/></svg>
<div class="b" style="left:151.2px;top:148.5px;width:5.7px;height:7.7px;background:#f3f3f3;"></div>
<div class="b" style="left:151.2px;top:156.2px;width:5.7px;height:243.8px;background:#dcdcdc;"></div>
<svg class="b" style="left:74px;top:402.5px;" width="14" height="4" viewBox="0 0 14 4"><circle cx="2.6" cy="2" r="1.25" fill="#555"/><circle cx="7" cy="2" r="1.25" fill="#555"/><circle cx="11.4" cy="2" r="1.25" fill="#555"/></svg>
<!-- thumbnails -->
<div class="b" style="left:4.4px;top:408px;width:153.5px;height:188px;background:#fff;border:1px solid #c9c9c9;"></div>
<div class="b" style="left:151.4px;top:409px;width:5.6px;height:142.5px;background:#e4e4e4;"></div>
<div class="b" style="left:151.4px;top:551.5px;width:5.6px;height:43.5px;background:#f7f7f7;"></div>
<svg class="b" style="left:0px;top:0px;" width="162" height="620" viewBox="0 0 162 620"><defs>
<pattern id="chk" width="4.4" height="3" patternUnits="userSpaceOnUse"><rect width="2.2" height="1.5" fill="#fff" opacity="0.16"/><rect x="2.2" y="1.5" width="2.2" height="1.5" fill="#fff" opacity="0.16"/><path d="M0 0 H4.4 M0 1.5 H4.4" stroke="#888" stroke-width="0.25" opacity="0.5"/></pattern>
<linearGradient id="flr" x1="0" y1="0" x2="0" y2="1"><stop offset="0" stop-color="#cfcfcf"/><stop offset="0.3" stop-color="#bcbcbc"/><stop offset="0.7" stop-color="#b0b0b0"/><stop offset="1" stop-color="#b6b6b6"/></linearGradient>
<radialGradient id="sBlack" cx="0.55" cy="0.22" r="0.85"><stop offset="0" stop-color="#5c5c5c"/><stop offset="0.4" stop-color="#303030"/><stop offset="0.75" stop-color="#1d1d1d"/><stop offset="1" stop-color="#101010"/></radialGradient>
<radialGradient id="sGrey" cx="0.5" cy="0.25" r="0.85"><stop offset="0" stop-color="#b0b0b0"/><stop offset="0.5" stop-color="#939393"/><stop offset="1" stop-color="#7b7b7b"/></radialGradient>
<radialGradient id="sOrange" cx="0.45" cy="0.25" r="0.85"><stop offset="0" stop-color="#dd5c18"/><stop offset="0.5" stop-color="#c0440c"/><stop offset="1" stop-color="#8a3008"/></radialGradient>
<radialGradient id="sRed" cx="0.45" cy="0.25" r="0.85"><stop offset="0" stop-color="#d92126"/><stop offset="0.5" stop-color="#b81118"/><stop offset="1" stop-color="#7a0a10"/></radialGradient>
<radialGradient id="sClear" cx="0.45" cy="0.35" r="0.75"><stop offset="0" stop-color="#dcdcdc"/><stop offset="0.7" stop-color="#c2c2c2"/><stop offset="1" stop-color="#a8a8a8"/></radialGradient>
<radialGradient id="hl" cx="0.5" cy="0.5" r="0.5"><stop offset="0" stop-color="#fff"/><stop offset="0.55" stop-color="#fff"/><stop offset="1" stop-color="#fff" stop-opacity="0"/></radialGradient>
<pattern id="chk2" width="5" height="4" patternUnits="userSpaceOnUse"><rect width="2.5" height="2" fill="#000"/><rect x="2.5" y="2" width="2.5" height="2" fill="#000"/></pattern>
<filter id="tbl" x="-30%" y="-30%" width="160%" height="160%"><feGaussianBlur stdDeviation="2.2"/></filter>
</defs><g transform="translate(9 409)"><rect width="63.6" height="63.6" fill="url(#flr)"/><rect width="63.6" height="63.6" fill="url(#chk)"/><ellipse cx="44" cy="50" rx="20" ry="8" fill="#000" opacity="0.3" filter="url(#tbl)"/><circle cx="32" cy="30.5" r="26.3" fill="url(#sBlack)" fill-opacity="1"/><circle cx="32" cy="30.5" r="26.3" fill="url(#chk2)" opacity="0.0"/><path d="M9 22 Q20 30 14 44 M16 48 Q30 44 38 52 M40 8 Q50 16 48 30 M30 5 Q36 8 40 6" fill="none" stroke="#555" stroke-opacity="0.5" stroke-width="1.6"/><path d="M12 14 Q30 2 50 12" fill="none" stroke="#fff" stroke-opacity="0.18" stroke-width="2.2"/><circle cx="25.5" cy="24" r="3.4" fill="url(#hl)"/></g><g transform="translate(81.8 409)"><rect width="63.6" height="63.6" fill="url(#flr)"/><rect width="63.6" height="63.6" fill="url(#chk)"/><ellipse cx="44" cy="50" rx="20" ry="8" fill="#000" opacity="0.12" filter="url(#tbl)"/><circle cx="32" cy="30.5" r="26.3" fill="url(#sGrey)" fill-opacity="0.9"/><circle cx="32" cy="30.5" r="26.3" fill="url(#chk2)" opacity="0.08"/><path d="M9 22 Q20 30 14 44 M16 48 Q30 44 38 52 M40 8 Q50 16 48 30 M30 5 Q36 8 40 6" fill="none" stroke="#555" stroke-opacity="0.3" stroke-width="1.6"/><path d="M12 14 Q30 2 50 12" fill="none" stroke="#fff" stroke-opacity="0.18" stroke-width="2.2"/><circle cx="25.5" cy="24" r="3.4" fill="url(#hl)"/></g><g transform="translate(9 490.4)"><rect width="63.6" height="63.6" fill="url(#flr)"/><rect width="63.6" height="63.6" fill="url(#chk)"/><ellipse cx="44" cy="50" rx="20" ry="8" fill="#000" opacity="0.14" filter="url(#tbl)"/><circle cx="32" cy="30.5" r="26.3" fill="url(#sOrange)" fill-opacity="1"/><circle cx="32" cy="30.5" r="26.3" fill="url(#chk2)" opacity="0.13"/><path d="M9 22 Q20 30 14 44 M16 48 Q30 44 38 52 M40 8 Q50 16 48 30 M30 5 Q36 8 40 6" fill="none" stroke="#6a2000" stroke-opacity="0.45" stroke-width="1.6"/><path d="M12 14 Q30 2 50 12" fill="none" stroke="#fff" stroke-opacity="0.18" stroke-width="2.2"/><circle cx="25.5" cy="24" r="3.4" fill="url(#hl)"/></g><g transform="translate(81.8 490.4)"><rect width="63.6" height="63.6" fill="url(#flr)"/><rect width="63.6" height="63.6" fill="url(#chk)"/><ellipse cx="44" cy="50" rx="20" ry="8" fill="#000" opacity="0.14" filter="url(#tbl)"/><circle cx="32" cy="30.5" r="26.3" fill="url(#sRed)" fill-opacity="1"/><circle cx="32" cy="30.5" r="26.3" fill="url(#chk2)" opacity="0.13"/><path d="M9 22 Q20 30 14 44 M16 48 Q30 44 38 52 M40 8 Q50 16 48 30 M30 5 Q36 8 40 6" fill="none" stroke="#5a0000" stroke-opacity="0.45" stroke-width="1.6"/><path d="M12 14 Q30 2 50 12" fill="none" stroke="#fff" stroke-opacity="0.18" stroke-width="2.2"/><circle cx="25.5" cy="24" r="3.4" fill="url(#hl)"/></g></svg>
<svg class="b" style="left:9px;top:571.4px;overflow:hidden" width="63.6" height="23.8" viewBox="0 0 63.6 23.8"><g transform="translate(0 0)"><rect width="63.6" height="63.6" fill="url(#flr)"/><rect width="63.6" height="63.6" fill="url(#chk)"/><ellipse cx="44" cy="50" rx="20" ry="8" fill="#000" opacity="0.04" filter="url(#tbl)"/><circle cx="32" cy="30.5" r="26.3" fill="url(#sClear)" fill-opacity="0.35"/><circle cx="32" cy="30.5" r="26.3" fill="url(#chk2)" opacity="0.03"/><path d="M9 22 Q20 30 14 44 M16 48 Q30 44 38 52 M40 8 Q50 16 48 30 M30 5 Q36 8 40 6" fill="none" stroke="#888" stroke-opacity="0.3" stroke-width="1.6"/><path d="M12 14 Q30 2 50 12" fill="none" stroke="#fff" stroke-opacity="0.18" stroke-width="2.2"/><circle cx="25.5" cy="24" r="3.4" fill="url(#hl)"/></g></svg>
<div class="t " style="left:41px;top:482px;transform:translate(-50%,-50%);font-size:5.9px;color:#3a3a3a;-webkit-text-stroke:0.03px currentColor;">Glass Basic Black</div>
<div class="t " style="left:113.5px;top:482px;transform:translate(-50%,-50%);font-size:5.9px;color:#3a3a3a;-webkit-text-stroke:0.03px currentColor;">Glass Basic Grey</div>
<div class="t " style="left:41px;top:563px;transform:translate(-50%,-50%);font-size:5.9px;color:#3a3a3a;-webkit-text-stroke:0.03px currentColor;">Glass Basic Orange</div>
<div class="t " style="left:113.5px;top:563px;transform:translate(-50%,-50%);font-size:5.9px;color:#3a3a3a;-webkit-text-stroke:0.03px currentColor;">Glass Basic Red</div>
<svg class="b" style="left:0px;top:0px;" width="162" height="620" viewBox="0 0 162 620"><path d="M5.5 602.4 H12 M5.5 605 H12 M5.5 607.6 H12" stroke="#444" stroke-width="1"/><rect x="16.3" y="601.7" width="1.7" height="1.7" fill="#2f7fe0"/><rect x="16.3" y="604.1" width="1.7" height="1.7" fill="#2f7fe0"/><rect x="16.3" y="606.5" width="1.7" height="1.7" fill="#2f7fe0"/><rect x="18.7" y="601.7" width="1.7" height="1.7" fill="#2f7fe0"/><rect x="18.7" y="604.1" width="1.7" height="1.7" fill="#2f7fe0"/><rect x="18.7" y="606.5" width="1.7" height="1.7" fill="#2f7fe0"/><rect x="21.1" y="601.7" width="1.7" height="1.7" fill="#2f7fe0"/><rect x="21.1" y="604.1" width="1.7" height="1.7" fill="#2f7fe0"/><rect x="21.1" y="606.5" width="1.7" height="1.7" fill="#2f7fe0"/><circle cx="35.6" cy="604" r="1.8" fill="#fff" stroke="#444" stroke-width="0.8"/><path d="M34.4 605.4 L32.4 607.4" stroke="#333" stroke-width="1.1"/><path d="M41.5 605 H103 M111.5 605 H117.5" stroke="#b4b4b4" stroke-width="0.6"/><circle cx="107.3" cy="605.1" r="2.6" fill="#555"/><circle cx="124" cy="604" r="1.8" fill="#fff" stroke="#444" stroke-width="0.8"/><path d="M122.8 605.4 L120.8 607.4" stroke="#333" stroke-width="1.1"/><path d="M135.6 606.6 A2 2 0 0 1 135.8 602.8 A2.6 2.6 0 0 1 140.8 602.6 A2.1 2.1 0 0 1 141.6 606.6" fill="none" stroke="#444" stroke-width="0.8"/><path d="M138.6 604 V608.6 M136.9 607 L138.6 608.9 L140.3 607" fill="none" stroke="#444" stroke-width="0.8"/><g transform="translate(147 600.8)"><path d="M0.6 2 H3.2 L3.8 2.8 H8 V3.6 H0.6 Z" fill="#555"/><path d="M1.6 4.2 H9 L7.6 7.6 H0.4 Z" fill="#555"/><path d="M6.2 7 H9.8 L8 9.2 Z" fill="#333"/><path d="M8 5.2 V7.6" stroke="#333" stroke-width="0.9"/></g></svg>
<!-- project panel -->
<div class="b" style="left:845px;top:89px;width:179px;height:528px;background:#fafafa;"></div>
<div class="b" style="left:843.4px;top:89px;width:1.8px;height:528px;background:#c6c6c6;"></div>
<div class="b" style="left:845px;top:89.5px;width:179px;height:10.5px;background:#efefef;"></div>
<div class="t " style="left:846.2px;top:95.2px;transform:translate(0,-50%);font-size:6px;">Project</div>
<div class="t bold" style="left:934.3px;top:95.2px;transform:translate(-50%,-50%);font-size:6px;color:#111;">Material</div>
<svg class="b" style="left:1000px;top:90px;" width="20" height="10" viewBox="0 0 20 10">
<rect x="3.4" y="3" width="4.2" height="3.2" fill="none" stroke="#555" stroke-width="0.6"/>
<path d="M2.4 4.6 V7.2 H5.8" fill="none" stroke="#555" stroke-width="0.6"/>
<path d="M15.2 2.4 L19.8 7.4 M19.8 2.4 L15.2 7.4" stroke="#444" stroke-width="1.1" fill="none"/>
</svg>
<svg class="b" style="left:855.4px;top:102.4px;" width="12" height="12" viewBox="0 0 12 12"><rect x="2.4" y="2.4" width="7.2" height="7.2" rx="0.6" fill="#fff" stroke="#666" stroke-width="0.7"/><path d="M6 2.4 V9.6 M3.6 4.4 H4.8 M3.6 6 H4.8 M3.6 7.6 H4.8 M7.2 4.4 H8.4 M7.2 6 H8.4" stroke="#777" stroke-width="0.5"/></svg>
<div class="t " style="left:861.4px;top:117.5px;transform:translate(-50%,-50%);font-size:5.95px;-webkit-text-stroke:0.04px currentColor;color:#333;">Scene</div>
<svg class="b" style="left:884.3px;top:102.4px;" width="12" height="12" viewBox="0 0 12 12"><circle cx="6" cy="5" r="3" fill="#fff" stroke="#1f6fd8" stroke-width="1.1"/><path d="M3.2 7.6 Q6 9.2 8.8 7.6 L9.2 8.8 H2.8 Z" fill="#1f6fd8"/></svg>
<div class="t " style="left:890.3px;top:117.5px;transform:translate(-50%,-50%);font-size:5.95px;-webkit-text-stroke:0.04px currentColor;color:#333;">Material</div>
<svg class="b" style="left:912.8px;top:102.4px;" width="12" height="12" viewBox="0 0 12 12"><rect x="2.2" y="3.4" width="7.6" height="5.8" rx="0.6" fill="none" stroke="#666" stroke-width="0.7"/><circle cx="6" cy="6.3" r="1.7" fill="none" stroke="#666" stroke-width="0.7"/><path d="M4.6 3.4 L5 2.4 H7 L7.4 3.4" fill="none" stroke="#666" stroke-width="0.6"/></svg>
<div class="t " style="left:918.8px;top:117.5px;transform:translate(-50%,-50%);font-size:5.95px;-webkit-text-stroke:0.04px currentColor;color:#333;">Camera</div>
<svg class="b" style="left:940.8px;top:102.4px;" width="12" height="12" viewBox="0 0 12 12"><circle cx="6" cy="6" r="3.7" fill="#e6e6e6" stroke="#9a9a9a" stroke-width="0.6"/><path d="M2.4 6 H9.6 M3 4.2 H9 M3 7.8 H9 M6 2.3 V9.7 M6 2.3 Q3.6 6 6 9.7 M6 2.3 Q8.4 6 6 9.7" fill="none" stroke="#9a9a9a" stroke-width="0.45"/></svg>
<div class="t " style="left:946.8px;top:117.5px;transform:translate(-50%,-50%);font-size:5.95px;-webkit-text-stroke:0.04px currentColor;color:#333;">Environ<span style="color:#999">...</span></div>
<svg class="b" style="left:970px;top:102.4px;" width="12" height="12" viewBox="0 0 12 12"><path d="M6 1.8 A2.8 2.8 0 0 1 7.6 6.9 V8.4 H4.4 V6.9 A2.8 2.8 0 0 1 6 1.8 Z" fill="#666"/><path d="M4.8 9.2 H7.2 M5.2 10.2 H6.8" stroke="#666" stroke-width="0.6"/></svg>
<div class="t " style="left:976px;top:117.5px;transform:translate(-50%,-50%);font-size:5.95px;-webkit-text-stroke:0.04px currentColor;color:#333;">Lighting</div>
<svg class="b" style="left:999.5px;top:102.4px;" width="12" height="12" viewBox="0 0 12 12"><rect x="3" y="3" width="6" height="6" fill="none" stroke="#666" stroke-width="0.7"/><path d="M2 2 H3.6 M2 2 V3.6 M10 2 H8.4 M10 2 V3.6 M2 10 H3.6 M2 10 V8.4 M10 10 H8.4 M10 10 V8.4" stroke="#555" stroke-width="0.7" fill="none"/></svg>
<div class="t " style="left:1005.5px;top:117.5px;transform:translate(-50%,-50%);font-size:5.95px;-webkit-text-stroke:0.04px currentColor;color:#333;">Image</div>
<div class="b" style="left:848px;top:122.6px;width:172.5px;height:1.1px;background:#e2e2e2;"></div>
<div class="b" style="left:876px;top:122.5px;width:28.6px;height:1.3px;background:#3f78dc;"></div>
<div class="t " style="left:848.3px;top:134.8px;transform:translate(0,-50%);font-size:5.8px;">Name:</div>
<div class="b" style="left:868px;top:130.3px;width:101px;height:8.099999999999994px;background:#fff;border:1px solid #c2c2c2;"></div><div class="t " style="left:869.8px;top:134.50000000000003px;transform:translate(0,-50%);font-size:5.55px;">AK2G:color:255:192:192 #1 #1</div>
<svg class="b" style="left:971px;top:129.5px;" width="10" height="10" viewBox="0 0 10 10"><path d="M1.6 1.6 H8.4 V8.6 H7 V5.6 H3 V8.6 H1.6 Z" fill="none" stroke="#555" stroke-width="0.9"/></svg>
<div class="b" style="left:985.3px;top:126px;width:35.2px;height:35.2px;background:#fff;border:1px solid #5a5a5a;border-radius:2.5px;"></div>
<svg class="b" style="left:985.3px;top:126px;" width="35.2" height="35.2" viewBox="0 0 35.2 35.2"><defs><radialGradient id="wsp" cx="0.5" cy="0.3" r="0.75"><stop offset="0" stop-color="#d39a70"/><stop offset="0.5" stop-color="#bd7f55"/><stop offset="1" stop-color="#84502f"/></radialGradient>
<linearGradient id="wband" x1="0" y1="0" x2="0" y2="1"><stop offset="0" stop-color="#000" stop-opacity="0"/><stop offset="0.48" stop-color="#6a3a1c" stop-opacity="0.35"/><stop offset="0.58" stop-color="#e0a878" stop-opacity="0.4"/><stop offset="1" stop-color="#000" stop-opacity="0"/></linearGradient></defs>
<circle cx="17.6" cy="17.8" r="15.4" fill="url(#wsp)"/><circle cx="17.6" cy="17.8" r="15.4" fill="url(#wband)"/>
<ellipse cx="17.6" cy="6.6" rx="4.2" ry="1.3" fill="#fff" opacity="0.4"/></svg>
<div class="b" style="left:857.1px;top:146.2px;width:53.60000000000002px;height:13.0px;background:#fdfdfd;border:1px solid #c6c6c6;"></div>
<svg class="b" style="left:859px;top:148.2px;" width="9" height="9" viewBox="0 0 9 9"><rect x="0.6" y="0.8" width="2.6" height="2.6" fill="#555"/><rect x="0.6" y="5.4" width="2.6" height="2.6" fill="#555"/><rect x="5" y="3.2" width="2.6" height="2.6" fill="#555"/><path d="M3.2 2.1 H4.2 V6.7 H3.2 M4.2 4.5 H5" fill="none" stroke="#555" stroke-width="0.5"/></svg>
<div class="t " style="left:867.6px;top:152.8px;transform:translate(0,-50%);font-size:5.6px;">Material Graph</div>
<div class="b" style="left:922.4px;top:146.2px;width:51.0px;height:13.0px;background:#fdfdfd;border:1px solid #c6c6c6;"></div>
<svg class="b" style="left:924.6px;top:148.2px;" width="9" height="9" viewBox="0 0 9 9"><path d="M0.6 4.5 H7.6 M3 4.5 L5.4 2.2 H7 M3 4.5 L5.4 6.8 H7 M6.4 3.4 L7.8 4.5 L6.4 5.6" fill="none" stroke="#555" stroke-width="0.7"/></svg>
<div class="t " style="left:933.3px;top:152.8px;transform:translate(0,-50%);font-size:5.6px;">Multi-Material</div>
<div class="t " style="left:848.5px;top:170.4px;transform:translate(0,-50%);font-size:5.8px;">Type:</div>
<div class="b" style="left:949.2px;top:165.2px;width:70.79999999999995px;height:9.600000000000023px;background:#fff;border:1px solid #c2c2c2;"></div><div class="t " style="left:951.8000000000001px;top:170.15px;transform:translate(0,-50%);font-size:5.6px;">Plastic</div><svg class="b" style="left:1013.8px;top:168.8px;" width="4" height="3" viewBox="0 0 4 3"><path d="M0.4 0.4 H3.6 L2 2.5 Z" fill="#333"/></svg>
<div class="t " style="left:896.3px;top:184px;transform:translate(-50%,-50%);font-size:5.9px;">Properties</div>
<div class="t " style="left:938px;top:184px;transform:translate(-50%,-50%);font-size:5.9px;">Textures</div>
<div class="t " style="left:980px;top:184px;transform:translate(-50%,-50%);font-size:5.9px;">Labels</div>
<div class="b" style="left:875.6px;top:188.4px;width:126px;height:1px;background:#e2e2e2;"></div>
<div class="b" style="left:918.3px;top:188.3px;width:40.4px;height:1.3px;background:#3f78dc;"></div>
<div class="b" style="left:860.9px;top:192px;width:33.8px;height:46.2px;background:#e1eefb;border:1px solid #cfe0f3;border-bottom:1.3px solid #2f7fd6;"></div>
<svg class="b" style="left:863px;top:194.8px;" width="29.8" height="32.2" viewBox="0 0 29.8 32.2"><defs><linearGradient id="wtex" x1="0" y1="0" x2="0" y2="1"><stop offset="0" stop-color="#e2bb98"/><stop offset="0.3" stop-color="#ddb38e"/><stop offset="0.5" stop-color="#e4bf9e"/><stop offset="0.75" stop-color="#dbb08a"/><stop offset="1" stop-color="#e0b792"/></linearGradient></defs>
<rect width="29.8" height="32.2" fill="url(#wtex)"/>
<path d="M0 4 H29.8 M0 9.5 H29.8 M0 13 H29.8 M0 19 H29.8 M0 24.5 H29.8 M0 28 H29.8" stroke="#c99870" stroke-opacity="0.35" stroke-width="0.6"/></svg>
<div class="b" style="left:862.3px;top:193.4px;width:6.4px;height:6.4px;background:#fff;border:0.8px solid #3b78d8;"></div>
<svg class="b" style="left:862.3px;top:193.4px;" width="6.4" height="6.4" viewBox="0 0 6.4 6.4"><path d="M1.2 3.2 L2.7 4.8 L5.3 1.5" fill="none" stroke="#2a6fd8" stroke-width="1"/></svg>
<div class="t " style="left:877.7px;top:232.4px;transform:translate(-50%,-50%);font-size:5.9px;">Diffuse</div>
<div class="b" style="left:898.2px;top:192px;width:34.39999999999998px;height:46.2px;background:#fff;border:1px solid #cfcfcf;"></div>
<div class="b" style="left:899.6px;top:193.4px;width:6.2px;height:6.2px;background:#fff;border:0.8px solid #777;"></div>
<div class="t " style="left:915.8000000000001px;top:205.6px;transform:translate(-50%,-50%);font-size:4.9px;color:#333;">No</div>
<div class="t " style="left:915.8000000000001px;top:211.5px;transform:translate(-50%,-50%);font-size:4.9px;color:#333;">Texture</div>
<div class="t " style="left:915.8000000000001px;top:217.2px;transform:translate(-50%,-50%);font-size:4.9px;color:#333;">Loaded</div>
<div class="t " style="left:915.4000000000001px;top:232.4px;transform:translate(-50%,-50%);font-size:5.9px;">Specular</div>
<div class="b" style="left:936.2px;top:192px;width:34.39999999999998px;height:46.2px;background:#fff;border:1px solid #cfcfcf;"></div>
<div class="b" style="left:937.6px;top:193.4px;width:6.2px;height:6.2px;background:#fff;border:0.8px solid #777;"></div>
<div class="t " style="left:953.8000000000001px;top:205.6px;transform:translate(-50%,-50%);font-size:4.9px;color:#333;">No</div>
<div class="t " style="left:953.8000000000001px;top:211.5px;transform:translate(-50%,-50%);font-size:4.9px;color:#333;">Texture</div>
<div class="t " style="left:953.8000000000001px;top:217.2px;transform:translate(-50%,-50%);font-size:4.9px;color:#333;">Loaded</div>
<div class="t " style="left:953.4000000000001px;top:232.4px;transform:translate(-50%,-50%);font-size:5.9px;">Bump</div>
<div class="b" style="left:973.4px;top:192px;width:34.60000000000002px;height:46.2px;background:#fff;border:1px solid #cfcfcf;"></div>
<div class="b" style="left:974.8px;top:193.4px;width:6.2px;height:6.2px;background:#fff;border:0.8px solid #777;"></div>
<div class="t " style="left:991.1px;top:205.6px;transform:translate(-50%,-50%);font-size:4.9px;color:#333;">No</div>
<div class="t " style="left:991.1px;top:211.5px;transform:translate(-50%,-50%);font-size:4.9px;color:#333;">Texture</div>
<div class="t " style="left:991.1px;top:217.2px;transform:translate(-50%,-50%);font-size:4.9px;color:#333;">Loaded</div>
<div class="t " style="left:990.7px;top:232.4px;transform:translate(-50%,-50%);font-size:5.9px;">Opacity</div>
<div class="t " style="left:848.4px;top:248.9px;transform:translate(0,-50%);font-size:5.8px;">Texture:</div>
<svg class="b" style="left:929px;top:244px;" width="9" height="10" viewBox="0 0 9 10"><path d="M1.4 2.6 H7.6 M3.4 2.6 V1.6 H5.6 V2.6 M2.2 2.6 L2.6 9 H6.4 L6.8 2.6 M3.6 4 V7.8 M4.5 4 V7.8 M5.4 4 V7.8" fill="none" stroke="#666" stroke-width="0.6"/></svg>
<div class="b" style="left:945.6px;top:243.6px;width:74.0px;height:10.0px;background:#fff;border:1px solid #c2c2c2;"></div><div class="t " style="left:948.2px;top:248.75px;transform:translate(0,-50%);font-size:5.6px;">Texture Map</div><svg class="b" style="left:1013.4px;top:247.4px;" width="4" height="3" viewBox="0 0 4 3"><path d="M0.4 0.4 H3.6 L2 2.5 Z" fill="#333"/></svg>
<div class="b" style="left:848.2px;top:260px;width:143.19999999999993px;height:9.399999999999977px;background:#fff;border:1px solid #c2c2c2;"></div><div class="t " style="left:850.0px;top:264.84999999999997px;transform:translate(0,-50%);font-size:5.55px;">TexturesCom_WoodFine0086_7_seamless_S.png</div>
<svg class="b" style="left:994.4px;top:260.2px;" width="10" height="9" viewBox="0 0 10 9"><path d="M0.8 1.6 H3.4 L4 2.4 H8 V3.4 H0.8 Z" fill="#555"/><path d="M1.8 4 H9.2 L7.8 7.6 H0.6 Z" fill="#555"/></svg>
<svg class="b" style="left:1008px;top:259.8px;" width="10" height="10" viewBox="0 0 10 10"><path d="M8.2 3.6 A3.2 3.2 0 0 0 2.2 4.4 M1.8 6.4 A3.2 3.2 0 0 0 7.8 5.6" fill="none" stroke="#555" stroke-width="0.9"/><path d="M0.8 4.8 L3.6 4.6 L2 2.6 Z M9.2 5.2 L6.4 5.4 L8 7.4 Z" fill="#555"/></svg>
<div class="t " style="left:848.4px;top:279.4px;transform:translate(0,-50%);font-size:5.8px;">Mapping Type</div>
<div class="b" style="left:943.3px;top:274.7px;width:76.30000000000007px;height:8.800000000000011px;background:#fff;border:1px solid #c2c2c2;"></div><div class="t " style="left:945.9px;top:279.25px;transform:translate(0,-50%);font-size:5.6px;">UV</div><svg class="b" style="left:1013.4px;top:277.90000000000003px;" width="4" height="3" viewBox="0 0 4 3"><path d="M0.4 0.4 H3.6 L2 2.5 Z" fill="#333"/></svg>
<div class="b" style="left:887px;top:287px;width:57.39999999999998px;height:12.899999999999977px;background:#fdfdfd;border:1px solid #c6c6c6;"></div>
<svg class="b" style="left:889px;top:289px;" width="9" height="9" viewBox="0 0 9 9"><circle cx="4.5" cy="4.5" r="3" fill="none" stroke="#555" stroke-width="0.7"/><path d="M4.5 0.6 V8.4 M0.6 4.5 H8.4" stroke="#555" stroke-width="0.6"/></svg>
<div class="t " style="left:897.8px;top:293.6px;transform:translate(0,-50%);font-size:5.6px;">Position Texture</div>
<div class="b" style="left:948.4px;top:287px;width:31.200000000000045px;height:12.899999999999977px;background:#fdfdfd;border:1px solid #c6c6c6;"></div>
<svg class="b" style="left:950.4px;top:289px;" width="9" height="9" viewBox="0 0 9 9"><path d="M7.4 3.2 A3.1 3.1 0 1 0 7.6 5.6" fill="none" stroke="#555" stroke-width="0.9"/><path d="M5.4 3.6 L8.4 3.8 L8.2 0.9 Z" fill="#555"/></svg>
<div class="t " style="left:958.8px;top:293.6px;transform:translate(0,-50%);font-size:5.6px;">Reset</div>
<div class="b" style="left:848.2px;top:303.8px;width:169.8px;height:9.699999999999989px;background:#e3e3e3;"></div><svg class="b" style="left:850.2px;top:306.65px;" width="5" height="4" viewBox="0 0 5 4"><path d="M0.8 0.8 L2.5 2.8 L4.2 0.8" fill="none" stroke="#2a6fd8" stroke-width="0.9"/></svg><div class="t bold" style="left:856.9px;top:308.84999999999997px;transform:translate(0,-50%);font-size:5.9px;color:#222;">Size and Mapping</div>
<div class="t " style="left:848.4px;top:321.2px;transform:translate(0,-50%);font-size:5.8px;">Scale Mode</div>
<svg class="b" style="left:919.3px;top:318.2px;" width="7" height="7" viewBox="0 0 7 7"><circle cx="3.5" cy="3.5" r="2.8" fill="#fff" stroke="#666" stroke-width="0.6"/></svg>
<div class="t " style="left:929.2px;top:321.8px;transform:translate(0,-50%);font-size:5.3px;">Scene Units</div>
<svg class="b" style="left:967.9px;top:318.2px;" width="7" height="7" viewBox="0 0 7 7"><circle cx="3.5" cy="3.5" r="2.8" fill="#fff" stroke="#666" stroke-width="0.6"/></svg>
<div class="t " style="left:977.3px;top:321.8px;transform:translate(0,-50%);font-size:5.3px;">DPI</div>
<svg class="b" style="left:995.6px;top:318.2px;" width="7" height="7" viewBox="0 0 7 7"><circle cx="3.5" cy="3.5" r="2.9" fill="#fff" stroke="#1f77e6" stroke-width="0.7"/><circle cx="3.5" cy="3.5" r="2.1" fill="#1f77e6"/></svg>
<div class="t " style="left:1005.5px;top:321.8px;transform:translate(0,-50%);font-size:5.3px;">UV</div>
<svg class="b" style="left:848.6px;top:333px;" width="8" height="9" viewBox="0 0 8 9"><path d="M3.2 5.2 L5 2.4 A1.3 1.3 0 0 1 7 3.8 L5.8 5.6 M4.8 3.8 L3 6.6 A1.3 1.3 0 0 1 1 5.2 L2.2 3.4" fill="none" stroke="#1f6fd8" stroke-width="0.8"/></svg>
<div class="t " style="left:861.6px;top:335px;transform:translate(0,-50%);font-size:5.8px;">Width</div>
<div class="b" style="left:975.4px;top:330.4px;width:42.60000000000002px;height:8.300000000000011px;background:#fff;border:1px solid #c2c2c2;"></div><div class="t " style="left:977.4px;top:334.69999999999993px;transform:translate(0,-50%);font-size:5.6px;">23</div>
<svg class="b" style="left:848.6px;top:352.6px;" width="8" height="9" viewBox="0 0 8 9"><circle cx="4.2" cy="4.6" r="2.4" fill="none" stroke="#cfcfcf" stroke-width="0.8" stroke-dasharray="3 1.2"/></svg>
<div class="t " style="left:861.6px;top:355.5px;transform:translate(0,-50%);font-size:5.8px;">Height</div>
<div class="b" style="left:975.4px;top:350.8px;width:42.60000000000002px;height:8.300000000000011px;background:#fff;border:1px solid #c2c2c2;"></div><div class="t " style="left:977.4px;top:355.1px;transform:translate(0,-50%);font-size:5.6px;">23</div>
<div class="t " style="left:848.4px;top:375.6px;transform:translate(0,-50%);font-size:5.8px;">Shift U</div>
<div class="b" style="left:975.4px;top:371.1px;width:42.60000000000002px;height:8.5px;background:#fff;border:1px solid #c2c2c2;"></div><div class="t " style="left:977.4px;top:375.5px;transform:translate(0,-50%);font-size:5.6px;">0</div>
<div class="t " style="left:848.4px;top:395.4px;transform:translate(0,-50%);font-size:5.8px;">Shift V</div>
<div class="b" style="left:975.4px;top:391.1px;width:42.60000000000002px;height:8.299999999999955px;background:#fff;border:1px solid #c2c2c2;"></div><div class="t " style="left:977.4px;top:395.4px;transform:translate(0,-50%);font-size:5.6px;">10.44</div>
<div class="t " style="left:848.4px;top:416.1px;transform:translate(0,-50%);font-size:5.8px;">Angle UV</div>
<div class="b" style="left:975.4px;top:411.4px;width:42.60000000000002px;height:8.300000000000011px;background:#fff;border:1px solid #c2c2c2;"></div><div class="t " style="left:977.4px;top:415.69999999999993px;transform:translate(0,-50%);font-size:5.6px;">0</div>
<svg class="b" style="left:848px;top:430.6px;" width="9" height="9" viewBox="0 0 9 9"><path d="M3.8 1.4 V7.6 M3.2 2.4 L0.8 4.5 L3.2 6.6 Z" fill="#777" stroke="#666" stroke-width="0.5"/><path d="M5.2 2.4 L7.6 4.5 L5.2 6.6 Z" fill="none" stroke="#666" stroke-width="0.6"/></svg>
<div class="t " style="left:859.2px;top:435px;transform:translate(0,-50%);font-size:5.5px;">Flip Horizontal</div>
<svg class="b" style="left:934px;top:430.6px;" width="10" height="9" viewBox="0 0 10 9"><rect x="0.6" y="3" width="2.2" height="3" fill="#2a6fd8"/><rect x="3.6" y="3" width="2.2" height="3" fill="#2a6fd8"/><rect x="6.6" y="3" width="2.2" height="3" fill="#2a6fd8"/></svg>
<div class="t " style="left:946.1px;top:435px;transform:translate(0,-50%);font-size:5.5px;">Repeat Horizontal</div>
<svg class="b" style="left:848px;top:442.2px;" width="9" height="9" viewBox="0 0 9 9"><path d="M1.4 4.4 H7.6 M2.4 3.8 L4.5 1.4 L6.6 3.8 Z" fill="none" stroke="#666" stroke-width="0.6"/><path d="M2.4 5.2 L4.5 7.6 L6.6 5.2 Z" fill="#777" stroke="#666" stroke-width="0.5"/></svg>
<div class="t " style="left:859.2px;top:446.7px;transform:translate(0,-50%);font-size:5.5px;">Flip Vertical</div>
<svg class="b" style="left:934px;top:442px;" width="10" height="10" viewBox="0 0 10 10"><rect x="3.6" y="0.8" width="2.6" height="2.2" fill="#666"/><rect x="3.6" y="3.8" width="2.6" height="2.2" fill="#aaa"/><rect x="3.6" y="6.8" width="2.6" height="2.2" fill="#666"/></svg>
<div class="t " style="left:946.1px;top:446.7px;transform:translate(0,-50%);font-size:5.5px;">Repeat Vertical</div>
<svg class="b" style="left:848px;top:454px;" width="9" height="9" viewBox="0 0 9 9"><path d="M2.2 2.2 L5 1 L7.4 3 L7 6.2 L4.2 7.8 L1.6 5.8 Z" fill="none" stroke="#1f6fd8" stroke-width="0.8" stroke-dasharray="2.4 0.9"/><path d="M6.2 3.6 L8.6 4.4 L6.6 6 Z" fill="#1f6fd8"/></svg>
<div class="t " style="left:859.2px;top:458.5px;transform:translate(0,-50%);font-size:5.5px;">Two Sided</div>
<svg class="b" style="left:934px;top:454px;" width="10" height="9" viewBox="0 0 10 9"><path d="M1.4 1 H5.8 L7.4 2.6 V8 H1.4 Z" fill="none" stroke="#1f6fd8" stroke-width="0.7"/><path d="M2.6 3.4 H5 M2.6 5 H4.4" stroke="#1f6fd8" stroke-width="0.5"/><circle cx="6.4" cy="6" r="1.7" fill="#fafafa" stroke="#1f6fd8" stroke-width="0.6"/></svg>
<div class="t " style="left:946.1px;top:458.5px;transform:translate(0,-50%);font-size:5.5px;">Sync</div>
<div class="b" style="left:848.2px;top:466.6px;width:169.8px;height:9.399999999999977px;background:#e3e3e3;"></div><svg class="b" style="left:850.2px;top:469.3px;" width="5" height="4" viewBox="0 0 5 4"><path d="M0.8 0.8 L2.5 2.8 L4.2 0.8" fill="none" stroke="#2a6fd8" stroke-width="0.9"/></svg><div class="t bold" style="left:856.9px;top:471.5px;transform:translate(0,-50%);font-size:5.9px;color:#222;">Color</div>
<div class="t " style="left:848.2px;top:484.8px;transform:translate(0,-50%);font-size:5.8px;">Brightness</div>
<div class="b" style="left:975.4px;top:480.1px;width:42.60000000000002px;height:8.799999999999955px;background:#fff;border:1px solid #c2c2c2;"></div><div class="t " style="left:977.4px;top:484.65px;transform:translate(0,-50%);font-size:5.6px;">1</div>
<div class="t " style="left:848.2px;top:504.9px;transform:translate(0,-50%);font-size:5.8px;">Contrast</div>
<div class="b" style="left:975.4px;top:500.6px;width:42.60000000000002px;height:8.699999999999989px;background:#fff;border:1px solid #c2c2c2;"></div><div class="t " style="left:977.4px;top:505.1px;transform:translate(0,-50%);font-size:5.6px;">1</div>
<svg class="b" style="left:0px;top:0px;pointer-events:none;" width="1024" height="682" viewBox="0 0 1024 682"><path d="M861.6 342.8 H1018" stroke="#c6c6c6" stroke-width="0.8"/><circle cx="933.4" cy="342.8" r="2.5" fill="#5c5c5c"/><path d="M861.6 363.2 H1018" stroke="#c6c6c6" stroke-width="0.8"/><circle cx="933.4" cy="363.2" r="2.5" fill="#5c5c5c"/><path d="M848.4 383.4 H1018" stroke="#c6c6c6" stroke-width="0.8"/><circle cx="933.2" cy="383.4" r="2.5" fill="#5c5c5c"/><path d="M848.4 403.7 H1018" stroke="#c6c6c6" stroke-width="0.8"/><circle cx="1014.1" cy="403.7" r="2.5" fill="#5c5c5c"/><path d="M848.4 423.9 H1018" stroke="#c6c6c6" stroke-width="0.8"/><circle cx="933.2" cy="423.9" r="2.5" fill="#5c5c5c"/><path d="M848.4 492.6 H1018" stroke="#c6c6c6" stroke-width="0.8"/><circle cx="884.6" cy="492.6" r="2.5" fill="#5c5c5c"/><path d="M848.4 513 H1018" stroke="#c6c6c6" stroke-width="0.8"/><circle cx="884.6" cy="513" r="2.5" fill="#5c5c5c"/></svg>
<div class="b" style="left:848.7px;top:522.9px;width:7px;height:6.8px;background:#fff;border:0.8px solid #777;"></div>
<div class="t " style="left:859.2px;top:526.5px;transform:translate(0,-50%);font-size:5.6px;">Blend with Color</div>
<div class="b" style="left:987.1px;top:521.3px;width:30.2px;height:10.4px;background:#050505;border-radius:2px;"></div>
<svg class="b" style="left:927px;top:552.3px;" width="14" height="4" viewBox="0 0 14 4"><circle cx="2.6" cy="2" r="1.25" fill="#555"/><circle cx="7" cy="2" r="1.25" fill="#555"/><circle cx="11.4" cy="2" r="1.25" fill="#555"/></svg>
<div class="b" style="left:848.3px;top:557.6px;width:171.8px;height:38.3px;background:#fff;border:1px solid #bdbdbd;"></div>
<div class="b" style="left:1013.8px;top:558.6px;width:5.3px;height:8.6px;background:#dedede;"></div>
<div class="b" style="left:1013.8px;top:567.2px;width:5.3px;height:27.7px;background:#f4f4f4;"></div>
<svg class="b" style="left:0px;top:0px;pointer-events:none;" width="1024" height="682" viewBox="0 0 1024 682"><defs><linearGradient id="psg" x1="0.2" y1="0.1" x2="0.75" y2="1"><stop offset="0" stop-color="#c4c4c4"/><stop offset="0.45" stop-color="#d9d9d9"/><stop offset="1" stop-color="#f3f3f3"/></linearGradient><filter id="psb" x="-30%" y="-30%" width="160%" height="160%"><feGaussianBlur stdDeviation="1"/></filter></defs><circle cx="869.1" cy="575.8" r="14.8" fill="url(#psg)"/><ellipse cx="878.6" cy="565.5" rx="8.5" ry="5" fill="#fff" opacity="0.95" transform="rotate(35 878.6 565.5)" filter="url(#psb)"/><circle cx="909.7" cy="575.8" r="14.8" fill="url(#psg)"/><ellipse cx="913.7" cy="567" rx="5" ry="2.6" fill="#fff" opacity="0.9" transform="rotate(25 913.7 567)" filter="url(#psb)"/><circle cx="949.9" cy="575.8" r="14.8" fill="url(#psg)"/><ellipse cx="959.4" cy="565.5" rx="8.5" ry="5" fill="#fff" opacity="0.95" transform="rotate(35 959.4 565.5)" filter="url(#psb)"/><circle cx="990.5" cy="575.8" r="14.8" fill="url(#psg)"/><ellipse cx="1000.0" cy="565.5" rx="8.5" ry="5" fill="#fff" opacity="0.95" transform="rotate(35 1000.0 565.5)" filter="url(#psb)"/></svg>
<svg class="b" style="left:0px;top:0px;pointer-events:none;" width="1024" height="682" viewBox="0 0 1024 682"><path d="M850 603 H856.4 M850 605.6 H856.4 M850 608.2 H856.4" stroke="#444" stroke-width="1"/><rect x="860.2" y="602.2" width="1.7" height="1.7" fill="#2f7fe0"/><rect x="860.2" y="604.6" width="1.7" height="1.7" fill="#2f7fe0"/><rect x="860.2" y="607.0" width="1.7" height="1.7" fill="#2f7fe0"/><rect x="862.6" y="602.2" width="1.7" height="1.7" fill="#2f7fe0"/><rect x="862.6" y="604.6" width="1.7" height="1.7" fill="#2f7fe0"/><rect x="862.6" y="607.0" width="1.7" height="1.7" fill="#2f7fe0"/><rect x="865.0" y="602.2" width="1.7" height="1.7" fill="#2f7fe0"/><rect x="865.0" y="604.6" width="1.7" height="1.7" fill="#2f7fe0"/><rect x="865.0" y="607.0" width="1.7" height="1.7" fill="#2f7fe0"/><path d="M870.6 602.6 H873 M872.4 605.4 H876.6 M872.4 608 H876.6 M871.2 603 V608 H872.4 M871.2 605.4 H872.4" stroke="#555" stroke-width="0.8" fill="none"/><circle cx="889.6" cy="604.6" r="1.8" fill="#fff" stroke="#444" stroke-width="0.8"/><path d="M888.4 606 L886.4 608" stroke="#333" stroke-width="1.1"/><path d="M895.8 605.6 H933.6 M942 605.6 H993" stroke="#bdbdbd" stroke-width="0.8"/><circle cx="937.8" cy="605.6" r="2.6" fill="#555"/><circle cx="1000.2" cy="604.6" r="1.8" fill="#fff" stroke="#444" stroke-width="0.8"/><path d="M999 606 L997 608" stroke="#333" stroke-width="1.1"/><path d="M1011.4 602.4 H1018 L1015.6 605 V608.6 L1014 607.6 V605 Z" fill="none" stroke="#555" stroke-width="0.8"/><path d="M1016.4 606.4 H1018.8 L1017.6 608 Z" fill="#444"/></svg>
<!-- bottom toolbar -->
<div class="b" style="left:0px;top:616.5px;width:1024px;height:34.3px;background:#fafafa;border-top:1px solid #e2e2e2;border-bottom:1.1px solid #8c8c8c;"></div>
<div class="b" style="left:2.5px;top:619px;width:1px;height:29px;background:repeating-linear-gradient(to bottom,#bdbdbd 0,#bdbdbd 1px,transparent 1px,transparent 2.5px);"></div>
<svg class="b" style="left:15px;top:619.5px;" width="20" height="20" viewBox="0 0 20 20"><path d="M5.4 14.6 A3.6 3.6 0 0 1 3.6 7.8 A3 3 0 0 1 7 5 A4.4 4.4 0 0 1 14.8 5.4 A3.6 3.6 0 0 1 16.8 12 A3 3 0 0 1 15 14.4" fill="none" stroke="#555" stroke-width="0.9"/><circle cx="10.2" cy="11" r="3.6" fill="none" stroke="#555" stroke-width="0.9" stroke-dasharray="4.4 1.3"/><circle cx="10.2" cy="11" r="1.7" fill="#555"/></svg>
<div class="t " style="left:24.3px;top:642.9px;transform:translate(-50%,-50%);font-size:5.7px;">Cloud Library</div>
<div class="b" style="left:418.3px;top:617.5px;width:38.2px;height:31px;background:#dfecfa;border-bottom:1.2px solid #9dbfe8;"></div>
<div class="b" style="left:457px;top:617.5px;width:38.2px;height:31px;background:#dfecfa;border-bottom:1.2px solid #9dbfe8;"></div>
<svg class="b" style="left:388.3px;top:618.8px;" width="20.8" height="20.8" viewBox="0 0 18 18"><circle cx="7.6" cy="7.6" r="5.6" fill="none" stroke="#555" stroke-width="0.9"/><path d="M7.6 3 V8.6 M5.2 6.6 L7.6 9.4 L10 6.6 Z" fill="#555" stroke="#555" stroke-width="0.9"/><circle cx="12.6" cy="12.6" r="3.4" fill="#fafafa" stroke="#555" stroke-width="0.8"/><path d="M10.8 12.6 H14.4 M12.6 10.8 V14.4" stroke="#555" stroke-width="0.8"/></svg><div class="t " style="left:398.7px;top:643.1px;transform:translate(-50%,-50%);font-size:5.7px;">Import</div>
<svg class="b" style="left:427.0px;top:618.8px;" width="20.8" height="20.8" viewBox="0 0 18 18"><path d="M2.2 4.2 Q5.8 3.2 9 5 Q12.2 3.2 15.8 4.2 V14.4 Q12.2 13.4 9 15.2 Q5.8 13.4 2.2 14.4 Z M9 5 V15.2" fill="#f4f9ff" stroke="#1f6fd8" stroke-width="1"/><path d="M1 3.4 L2.2 2 L3.4 3.4 Z" fill="#333"/></svg><div class="t " style="left:437.4px;top:643.1px;transform:translate(-50%,-50%);font-size:5.7px;">Library</div>
<svg class="b" style="left:465.6px;top:618.8px;" width="20.8" height="20.8" viewBox="0 0 18 18"><rect x="3" y="2.6" width="11.6" height="12.8" rx="1" fill="#f4f9ff" stroke="#1f6fd8" stroke-width="1"/><path d="M5.4 6 H12.2 M5.4 9 H12.2 M5.4 12 H12.2" stroke="#1f6fd8" stroke-width="1"/><path d="M15.6 5 V6.4 M15.6 8.2 V9.6 M15.6 11.4 V12.8" stroke="#1f6fd8" stroke-width="0.9"/><path d="M1 3.4 L2.2 2 L3.4 3.4 Z" fill="#333"/></svg><div class="t " style="left:476px;top:643.1px;transform:translate(-50%,-50%);font-size:5.7px;">Project</div>
<svg class="b" style="left:503.20000000000005px;top:618.8px;" width="20.8" height="20.8" viewBox="0 0 18 18"><path d="M4.2 5.4 A6 6 0 1 1 3.2 10.6" fill="none" stroke="#555" stroke-width="1"/><path d="M2 3.4 L5.6 4 L3.4 7 Z" fill="#555"/><path d="M7.4 6 L12.4 9 L7.4 12 Z" fill="#555"/></svg><div class="t " style="left:513.6px;top:643.1px;transform:translate(-50%,-50%);font-size:5.7px;">Animation</div>
<svg class="b" style="left:541.8000000000001px;top:618.8px;" width="20.8" height="20.8" viewBox="0 0 18 18"><path d="M9 2.4 L13.6 4.6 V10.2 L9 12.4 L4.4 10.2 V4.6 Z M4.4 4.6 L9 6.8 L13.6 4.6 M9 6.8 V12.4" fill="none" stroke="#555" stroke-width="0.9"/><path d="M3.4 9 Q0.6 12.6 6 14.8 M14.6 9 Q17.4 12.6 12 14.8" fill="none" stroke="#555" stroke-width="0.9"/><path d="M5.2 13 L7.4 15.4 L4.4 16.2 Z M12.8 13 L10.6 15.4 L13.6 16.2 Z" fill="#555"/></svg><div class="t " style="left:552.2px;top:643.1px;transform:translate(-50%,-50%);font-size:5.7px;">KeyShotXR</div>
<svg class="b" style="left:579.9px;top:618.8px;" width="20.8" height="20.8" viewBox="0 0 18 18"><path d="M3 9 A6 6 0 0 1 15 9 V12.6 Q9 15.4 3 12.6 Z" fill="#e9e9e9" stroke="#d0d0d0" stroke-width="0.8"/><path d="M4.4 9.6 H13.6 V11.6 Q9 13 4.4 11.6 Z" fill="#fafafa" stroke="#d0d0d0" stroke-width="0.6"/></svg><div class="t g" style="left:590.3px;top:643.1px;transform:translate(-50%,-50%);font-size:5.7px;">KeyVR</div>
<svg class="b" style="left:618.9px;top:618.8px;" width="20.8" height="20.8" viewBox="0 0 18 18"><rect x="2.6" y="4" width="11" height="9" rx="0.8" fill="none" stroke="#555" stroke-width="0.9"/><circle cx="7.6" cy="8.6" r="2.6" fill="none" stroke="#555" stroke-width="0.9"/><path d="M4.4 4 V2.8 H6.8 V4 M10.6 4 V3 H12.4 V4" fill="none" stroke="#555" stroke-width="0.7"/><circle cx="13" cy="12.6" r="3" fill="#fafafa" stroke="#555" stroke-width="0.8"/><path d="M11.6 12.6 L12.7 13.8 L14.5 11.6" fill="none" stroke="#555" stroke-width="0.8"/></svg><div class="t " style="left:629.3px;top:643.1px;transform:translate(-50%,-50%);font-size:5.7px;">Render</div>
<svg class="b" style="left:994px;top:619px;" width="20" height="20" viewBox="0 0 20 20"><path d="M2.6 4.6 V2.6 H4.6 M6.6 2.6 H9 M11 2.6 H13 V4.6 M2.6 6.6 V9 M2.6 11 V13 H4.6" fill="none" stroke="#444" stroke-width="0.9"/><circle cx="13.6" cy="13.2" r="3.2" fill="none" stroke="#444" stroke-width="0.8"/><path d="M13.6 8.8 V17.6 M9.2 13.2 H18" stroke="#444" stroke-width="0.7"/></svg>
<div class="t " style="left:1003.4px;top:642.6px;transform:translate(-50%,-50%);font-size:5.7px;">Screenshot</div>
<!-- viewport -->
<svg class="b" style="left:0;top:0" width="1024" height="682" viewBox="0 0 1024 682"><defs>
<radialGradient id="vbg" cx="0.5" cy="0.45" r="0.75"><stop offset="0" stop-color="#ffffff"/><stop offset="0.55" stop-color="#fefefe"/><stop offset="1" stop-color="#f6f6f6"/></radialGradient>
<filter id="bl6" x="-30%" y="-30%" width="160%" height="160%"><feGaussianBlur stdDeviation="6"/></filter>
<filter id="bl3" x="-30%" y="-30%" width="160%" height="160%"><feGaussianBlur stdDeviation="3"/></filter>
<filter id="bl1" x="-30%" y="-30%" width="160%" height="160%"><feGaussianBlur stdDeviation="1.2"/></filter>
<linearGradient id="woodg" gradientUnits="userSpaceOnUse" x1="225" y1="345" x2="495" y2="270"><stop offset="0" stop-color="#be8751"/><stop offset="0.25" stop-color="#c9935b"/><stop offset="0.6" stop-color="#c48c55"/><stop offset="0.85" stop-color="#b8804a"/><stop offset="1" stop-color="#966433"/></linearGradient>
<linearGradient id="woodlit" gradientUnits="userSpaceOnUse" x1="330" y1="280" x2="352" y2="343"><stop offset="0" stop-color="#e6b07a" stop-opacity="0.45"/><stop offset="0.35" stop-color="#e6b07a" stop-opacity="0"/><stop offset="0.8" stop-color="#8a5524" stop-opacity="0"/><stop offset="1" stop-color="#8a5524" stop-opacity="0.35"/></linearGradient>
<linearGradient id="bodyg" gradientUnits="userSpaceOnUse" x1="330" y1="340" x2="352" y2="405"><stop offset="0" stop-color="#ffffff"/><stop offset="0.3" stop-color="#fbfbfb"/><stop offset="0.36" stop-color="#eeeeee"/><stop offset="0.8" stop-color="#e9e9e9"/><stop offset="1" stop-color="#dcdcdc"/></linearGradient>
<pattern id="tri" width="8" height="7" patternUnits="userSpaceOnUse" patternTransform="rotate(-19)"><path d="M0 0 L8 7 M8 0 L0 7" stroke="#fbfbfb" stroke-width="1.1" fill="none"/><path d="M0 3.5 H8 M4 0 V7" stroke="#f4f4f4" stroke-width="0.7" fill="none"/><path d="M1.2 0 L4 2.4 L6.8 0 M1.2 7 L4 4.6 L6.8 7 M0 1.2 L2.6 3.5 L0 5.8 M8 1.2 L5.4 3.5 L8 5.8" stroke="#d3d3d3" stroke-width="0.55" fill="none"/></pattern>
<pattern id="mesh" width="3" height="2.4" patternUnits="userSpaceOnUse" patternTransform="rotate(-18)"><rect width="3" height="2.4" fill="#e2e2e2"/><path d="M0 2.4 L1.5 0 L3 2.4" stroke="#6c6c6c" stroke-width="0.78" fill="none"/></pattern>
<linearGradient id="blk" gradientUnits="userSpaceOnUse" x1="600" y1="300" x2="640" y2="420"><stop offset="0" stop-color="#2e2e2e"/><stop offset="0.5" stop-color="#262626"/><stop offset="1" stop-color="#1c1c1c"/></linearGradient>
<linearGradient id="baseg" gradientUnits="userSpaceOnUse" x1="703" y1="370" x2="790" y2="345"><stop offset="0" stop-color="#cecece"/><stop offset="0.25" stop-color="#dedede"/><stop offset="1" stop-color="#ececec"/></linearGradient>
<clipPath id="vclip"><rect x="163.7" y="89.5" width="679.3" height="527"/></clipPath>
</defs>
<g clip-path="url(#vclip)">
<rect x="163.7" y="89.5" width="679.3" height="527" fill="url(#vbg)"/>
<path d="M222 418 L300 420 L420 380 L494 345 L505 320 L520 330 L500 372 L380 420 L270 445 L232 440 Z" fill="#8a7a6a" opacity="0.22" filter="url(#bl6)"/><path d="M232 425 L300 419 L460 362 L492 338 L498 345 L470 368 L320 424 L262 434 Z" fill="#6a5a4a" opacity="0.36" filter="url(#bl3)"/><path d="M222.0 331.0 C193.7 328.8 218.5 333.2 215.0 338.5 C211.5 343.8 213.0 341.2 211.5 347.0 C210.0 352.8 210.7 349.7 210.5 356.0 C210.3 362.3 210.3 359.3 210.8 366.0 C211.3 372.7 210.8 370.2 212.0 376.0 C213.2 381.8 212.6 377.5 214.4 383.5 C216.2 389.5 215.2 387.2 217.5 394.0 C219.8 400.8 218.2 398.2 221.4 404.0 C224.6 409.8 222.9 406.8 227.0 411.5 C231.1 416.2 228.4 414.2 233.7 418.0 C239.0 421.8 236.6 420.3 243.0 423.0 C249.4 425.7 246.0 424.7 253.0 426.0 C260.0 427.3 257.0 427.0 264.0 427.0 C271.0 427.0 266.3 427.6 274.0 426.0 C281.7 424.4 278.1 425.3 287.0 422.3 C295.9 419.3 291.3 420.6 300.6 417.0 C309.9 413.4 301.9 416.5 315.0 411.5 C328.1 406.5 318.3 410.1 340.0 402.0 C361.7 393.9 354.0 396.3 380.0 387.2 C406.0 378.1 392.6 383.4 418.0 374.8 C443.4 366.2 439.9 367.4 456.2 361.5 C472.5 355.6 460.6 360.2 467.0 357.0 C473.4 353.8 469.7 355.4 475.3 352.0 C480.9 348.6 478.7 350.9 483.9 346.7 C489.1 342.5 487.2 344.6 491.0 339.5 C494.8 334.4 493.3 336.8 495.2 331.3 C497.1 325.8 496.1 330.2 496.7 323.1 C497.3 316.0 502.6 317.7 497.0 310.0 C491.4 302.3 512.3 296.0 480.0 300.0 C447.7 304.0 460.0 307.0 400.0 322.0 C340.0 337.0 359.3 342.0 300.0 345.0 C240.7 348.0 250.3 333.2 222.0 331.0 Z" fill="url(#bodyg)"/><path d="M212.8 375.8 C215.0 376.5 215.2 377.7 221.0 380.0 C226.8 382.3 223.5 381.0 230.2 382.8 C236.9 384.6 233.4 384.0 241.0 385.5 C248.6 387.0 245.3 386.6 253.0 387.2 C260.7 387.8 256.9 387.7 264.0 387.4 C271.1 387.1 266.5 387.6 274.2 386.3 C281.9 385.0 278.2 385.8 287.0 383.5 C295.8 381.2 291.3 382.5 300.6 379.3 C309.9 376.1 301.9 379.1 315.0 374.0 C328.1 368.9 318.3 372.7 340.0 364.0 C361.7 355.3 347.7 360.1 380.0 347.8 C412.3 335.5 413.7 335.6 437.0 327.2 C460.3 318.8 438.8 326.4 450.0 322.5 C461.2 318.6 461.8 318.0 470.5 315.6 C479.2 313.2 472.6 314.9 476.0 315.2 C479.4 315.5 477.6 315.2 480.8 316.4 C484.0 317.6 482.8 316.9 485.5 318.8 C488.2 320.7 487.0 319.8 489.0 322.0 C491.0 324.2 490.1 323.1 491.5 325.5 C492.9 327.9 493.6 325.3 493.1 329.3 C492.6 333.3 493.5 332.4 490.0 337.5 C486.5 342.6 487.8 340.3 482.5 344.5 C477.2 348.7 479.7 346.7 474.0 350.0 C468.3 353.3 471.8 351.6 465.5 354.5 C459.2 357.4 470.8 352.8 455.0 358.6 C439.2 364.4 443.0 363.3 418.0 371.8 C393.0 380.3 406.0 375.3 380.0 384.2 C354.0 393.1 361.7 390.7 340.0 398.6 C318.3 406.5 328.1 403.0 315.0 408.0 C301.9 413.0 309.9 410.0 300.6 413.5 C291.3 417.0 295.9 415.7 287.0 418.6 C278.1 421.5 281.7 420.7 274.0 422.3 C266.3 423.9 271.0 423.3 264.0 423.3 C257.0 423.3 259.7 423.6 253.0 422.4 C246.3 421.2 249.7 422.1 244.0 419.8 C238.3 417.5 240.8 418.9 236.0 415.5 C231.2 412.1 233.3 413.8 229.5 409.5 C225.7 405.2 227.5 408.0 224.5 402.5 C221.5 397.0 223.0 399.5 220.5 393.0 C218.0 386.5 219.0 388.0 217.0 383.0 C215.0 378.0 215.9 380.4 214.5 378.0 C213.1 375.6 210.6 375.1 212.8 375.8 Z" fill="#e7e7e7"/><path d="M212.8 375.8 C215.0 376.5 215.2 377.7 221.0 380.0 C226.8 382.3 223.5 381.0 230.2 382.8 C236.9 384.6 233.4 384.0 241.0 385.5 C248.6 387.0 245.3 386.6 253.0 387.2 C260.7 387.8 256.9 387.7 264.0 387.4 C271.1 387.1 266.5 387.6 274.2 386.3 C281.9 385.0 278.2 385.8 287.0 383.5 C295.8 381.2 291.3 382.5 300.6 379.3 C309.9 376.1 301.9 379.1 315.0 374.0 C328.1 368.9 318.3 372.7 340.0 364.0 C361.7 355.3 347.7 360.1 380.0 347.8 C412.3 335.5 413.7 335.6 437.0 327.2 C460.3 318.8 438.8 326.4 450.0 322.5 C461.2 318.6 461.8 318.0 470.5 315.6 C479.2 313.2 472.6 314.9 476.0 315.2 C479.4 315.5 477.6 315.2 480.8 316.4 C484.0 317.6 482.8 316.9 485.5 318.8 C488.2 320.7 487.0 319.8 489.0 322.0 C491.0 324.2 490.1 323.1 491.5 325.5 C492.9 327.9 493.6 325.3 493.1 329.3 C492.6 333.3 493.5 332.4 490.0 337.5 C486.5 342.6 487.8 340.3 482.5 344.5 C477.2 348.7 479.7 346.7 474.0 350.0 C468.3 353.3 471.8 351.6 465.5 354.5 C459.2 357.4 470.8 352.8 455.0 358.6 C439.2 364.4 443.0 363.3 418.0 371.8 C393.0 380.3 406.0 375.3 380.0 384.2 C354.0 393.1 361.7 390.7 340.0 398.6 C318.3 406.5 328.1 403.0 315.0 408.0 C301.9 413.0 309.9 410.0 300.6 413.5 C291.3 417.0 295.9 415.7 287.0 418.6 C278.1 421.5 281.7 420.7 274.0 422.3 C266.3 423.9 271.0 423.3 264.0 423.3 C257.0 423.3 259.7 423.6 253.0 422.4 C246.3 421.2 249.7 422.1 244.0 419.8 C238.3 417.5 240.8 418.9 236.0 415.5 C231.2 412.1 233.3 413.8 229.5 409.5 C225.7 405.2 227.5 408.0 224.5 402.5 C221.5 397.0 223.0 399.5 220.5 393.0 C218.0 386.5 219.0 388.0 217.0 383.0 C215.0 378.0 215.9 380.4 214.5 378.0 C213.1 375.6 210.6 375.1 212.8 375.8 Z" fill="url(#tri)"/><clipPath id="bclip"><path d="M222.0 331.0 C193.7 328.8 218.5 333.2 215.0 338.5 C211.5 343.8 213.0 341.2 211.5 347.0 C210.0 352.8 210.7 349.7 210.5 356.0 C210.3 362.3 210.3 359.3 210.8 366.0 C211.3 372.7 210.8 370.2 212.0 376.0 C213.2 381.8 212.6 377.5 214.4 383.5 C216.2 389.5 215.2 387.2 217.5 394.0 C219.8 400.8 218.2 398.2 221.4 404.0 C224.6 409.8 222.9 406.8 227.0 411.5 C231.1 416.2 228.4 414.2 233.7 418.0 C239.0 421.8 236.6 420.3 243.0 423.0 C249.4 425.7 246.0 424.7 253.0 426.0 C260.0 427.3 257.0 427.0 264.0 427.0 C271.0 427.0 266.3 427.6 274.0 426.0 C281.7 424.4 278.1 425.3 287.0 422.3 C295.9 419.3 291.3 420.6 300.6 417.0 C309.9 413.4 301.9 416.5 315.0 411.5 C328.1 406.5 318.3 410.1 340.0 402.0 C361.7 393.9 354.0 396.3 380.0 387.2 C406.0 378.1 392.6 383.4 418.0 374.8 C443.4 366.2 439.9 367.4 456.2 361.5 C472.5 355.6 460.6 360.2 467.0 357.0 C473.4 353.8 469.7 355.4 475.3 352.0 C480.9 348.6 478.7 350.9 483.9 346.7 C489.1 342.5 487.2 344.6 491.0 339.5 C494.8 334.4 493.3 336.8 495.2 331.3 C497.1 325.8 496.1 330.2 496.7 323.1 C497.3 316.0 502.6 317.7 497.0 310.0 C491.4 302.3 512.3 296.0 480.0 300.0 C447.7 304.0 460.0 307.0 400.0 322.0 C340.0 337.0 359.3 342.0 300.0 345.0 C240.7 348.0 250.3 333.2 222.0 331.0 Z"/></clipPath><g clip-path="url(#bclip)"><path d="M214 392 C218 404 226 415 236 421 C246 426 258 428.5 270 427.5 L300.6 418 L340 403 L380 388.2 L456 362.5 C470 357.5 484 348 491.5 338" fill="none" stroke="#bcbcbc" stroke-width="2.2" opacity="0.55" filter="url(#bl1)"/></g><path d="M211 356 C211 375 213 392 216 402 C219 412 226 420 236 424 C226 414 222 400 220 384 C219 372 219 362 220 352 Z" fill="#d0d0d0" opacity="0.5" filter="url(#bl1)"/><path d="M219.5 344.3 C219.6 341.5 219.3 342.6 220.3 339.5 C221.3 336.4 220.6 338.0 222.4 335.1 C224.2 332.2 223.1 333.4 225.8 330.8 C228.5 328.2 226.8 329.8 230.4 327.2 C234.0 324.6 232.1 325.6 236.5 323.0 C240.9 320.4 238.0 321.9 243.5 319.4 C249.0 316.9 246.4 318.0 253.0 315.5 C259.6 313.0 247.6 317.3 263.3 311.8 C279.0 306.3 274.4 307.9 300.0 299.0 C325.6 290.1 310.0 295.5 340.0 285.0 C370.0 274.5 362.2 277.1 390.0 267.6 C417.8 258.1 409.8 260.9 423.5 256.6 C437.2 252.3 425.9 255.7 431.0 254.6 C436.1 253.5 434.4 253.9 438.7 253.3 C443.0 252.7 440.5 253.0 444.0 252.8 C447.5 252.6 446.0 252.7 449.3 252.8 C452.6 252.9 450.9 252.7 454.0 253.2 C457.1 253.7 455.4 253.3 458.6 254.2 C461.8 255.1 460.4 254.5 463.5 256.0 C466.6 257.5 465.1 256.7 468.0 258.6 C470.9 260.5 469.5 259.5 472.2 261.8 C474.9 264.1 473.5 262.7 476.2 265.5 C478.9 268.3 477.7 267.0 480.4 270.3 C483.1 273.6 481.9 272.1 484.4 275.5 C486.9 278.9 485.6 277.0 488.0 280.5 C490.4 284.0 489.5 282.7 491.5 286.0 C493.5 289.3 492.4 287.4 494.0 290.5 C495.6 293.6 494.9 292.1 496.2 295.4 C497.5 298.7 496.9 297.0 497.8 300.5 C498.7 304.0 498.4 303.2 498.9 306.0 C499.4 308.8 499.1 307.0 499.2 309.0 C499.3 311.0 499.3 309.8 499.1 312.0 C498.9 314.2 499.1 313.2 498.6 315.5 C498.1 317.8 498.3 316.5 497.7 319.0 C497.1 321.5 497.1 323.1 496.7 323.1 C496.3 323.1 496.8 321.7 496.6 319.0 C496.4 316.3 496.6 317.4 496.2 314.9 C495.8 312.4 496.1 313.7 495.4 311.5 C494.7 309.3 495.3 310.4 494.1 308.2 C492.9 306.0 493.5 306.9 491.8 304.9 C490.1 302.9 491.3 303.8 489.0 302.1 C486.7 300.4 487.7 301.1 485.0 299.8 C482.3 298.5 483.5 299.0 480.8 298.3 C478.1 297.6 479.5 297.9 476.8 297.6 C474.1 297.3 475.3 297.3 472.7 297.4 C470.1 297.5 471.4 297.4 469.0 297.8 C466.6 298.2 468.9 297.7 465.4 298.5 C461.9 299.3 463.7 298.8 458.6 300.3 C453.5 301.8 457.1 300.7 450.0 303.1 C442.9 305.5 447.2 303.9 437.2 307.4 C427.2 310.9 439.1 306.9 420.0 313.6 C400.9 320.3 406.7 318.2 380.0 327.6 C353.3 337.0 366.7 332.4 340.0 341.9 C313.3 351.4 316.7 350.2 300.0 356.2 C283.3 362.2 296.3 357.6 290.0 359.8 C283.7 362.0 286.4 361.0 281.0 362.8 C275.6 364.6 278.9 363.6 273.9 365.2 C268.9 366.8 270.8 366.4 266.0 367.6 C261.2 368.8 263.9 368.4 259.4 368.9 C254.9 369.4 256.9 369.3 252.5 369.2 C248.1 369.1 250.4 369.2 246.2 368.5 C242.0 367.8 244.0 368.2 240.0 367.0 C236.0 365.8 237.6 366.4 234.3 364.8 C231.0 363.2 232.6 364.1 230.0 362.3 C227.4 360.5 228.6 361.5 226.4 359.3 C224.2 357.1 225.2 358.3 223.4 355.8 C221.6 353.3 222.3 354.4 221.1 351.8 C219.9 349.2 220.4 350.5 219.9 348.0 C219.4 345.5 219.4 347.1 219.5 344.3 Z" fill="url(#woodg)"/><clipPath id="wclip"><path d="M219.5 344.3 C219.6 341.5 219.3 342.6 220.3 339.5 C221.3 336.4 220.6 338.0 222.4 335.1 C224.2 332.2 223.1 333.4 225.8 330.8 C228.5 328.2 226.8 329.8 230.4 327.2 C234.0 324.6 232.1 325.6 236.5 323.0 C240.9 320.4 238.0 321.9 243.5 319.4 C249.0 316.9 246.4 318.0 253.0 315.5 C259.6 313.0 247.6 317.3 263.3 311.8 C279.0 306.3 274.4 307.9 300.0 299.0 C325.6 290.1 310.0 295.5 340.0 285.0 C370.0 274.5 362.2 277.1 390.0 267.6 C417.8 258.1 409.8 260.9 423.5 256.6 C437.2 252.3 425.9 255.7 431.0 254.6 C436.1 253.5 434.4 253.9 438.7 253.3 C443.0 252.7 440.5 253.0 444.0 252.8 C447.5 252.6 446.0 252.7 449.3 252.8 C452.6 252.9 450.9 252.7 454.0 253.2 C457.1 253.7 455.4 253.3 458.6 254.2 C461.8 255.1 460.4 254.5 463.5 256.0 C466.6 257.5 465.1 256.7 468.0 258.6 C470.9 260.5 469.5 259.5 472.2 261.8 C474.9 264.1 473.5 262.7 476.2 265.5 C478.9 268.3 477.7 267.0 480.4 270.3 C483.1 273.6 481.9 272.1 484.4 275.5 C486.9 278.9 485.6 277.0 488.0 280.5 C490.4 284.0 489.5 282.7 491.5 286.0 C493.5 289.3 492.4 287.4 494.0 290.5 C495.6 293.6 494.9 292.1 496.2 295.4 C497.5 298.7 496.9 297.0 497.8 300.5 C498.7 304.0 498.4 303.2 498.9 306.0 C499.4 308.8 499.1 307.0 499.2 309.0 C499.3 311.0 499.3 309.8 499.1 312.0 C498.9 314.2 499.1 313.2 498.6 315.5 C498.1 317.8 498.3 316.5 497.7 319.0 C497.1 321.5 497.1 323.1 496.7 323.1 C496.3 323.1 496.8 321.7 496.6 319.0 C496.4 316.3 496.6 317.4 496.2 314.9 C495.8 312.4 496.1 313.7 495.4 311.5 C494.7 309.3 495.3 310.4 494.1 308.2 C492.9 306.0 493.5 306.9 491.8 304.9 C490.1 302.9 491.3 303.8 489.0 302.1 C486.7 300.4 487.7 301.1 485.0 299.8 C482.3 298.5 483.5 299.0 480.8 298.3 C478.1 297.6 479.5 297.9 476.8 297.6 C474.1 297.3 475.3 297.3 472.7 297.4 C470.1 297.5 471.4 297.4 469.0 297.8 C466.6 298.2 468.9 297.7 465.4 298.5 C461.9 299.3 463.7 298.8 458.6 300.3 C453.5 301.8 457.1 300.7 450.0 303.1 C442.9 305.5 447.2 303.9 437.2 307.4 C427.2 310.9 439.1 306.9 420.0 313.6 C400.9 320.3 406.7 318.2 380.0 327.6 C353.3 337.0 366.7 332.4 340.0 341.9 C313.3 351.4 316.7 350.2 300.0 356.2 C283.3 362.2 296.3 357.6 290.0 359.8 C283.7 362.0 286.4 361.0 281.0 362.8 C275.6 364.6 278.9 363.6 273.9 365.2 C268.9 366.8 270.8 366.4 266.0 367.6 C261.2 368.8 263.9 368.4 259.4 368.9 C254.9 369.4 256.9 369.3 252.5 369.2 C248.1 369.1 250.4 369.2 246.2 368.5 C242.0 367.8 244.0 368.2 240.0 367.0 C236.0 365.8 237.6 366.4 234.3 364.8 C231.0 363.2 232.6 364.1 230.0 362.3 C227.4 360.5 228.6 361.5 226.4 359.3 C224.2 357.1 225.2 358.3 223.4 355.8 C221.6 353.3 222.3 354.4 221.1 351.8 C219.9 349.2 220.4 350.5 219.9 348.0 C219.4 345.5 219.4 347.1 219.5 344.3 Z"/></clipPath><g clip-path="url(#wclip)"><path d="M324.9 323.0 L474.6 270.5" stroke="#b98248" stroke-width="0.83" opacity="0.26"/><path d="M418.0 285.2 L525.9 246.9" stroke="#94602e" stroke-width="0.55" opacity="0.23"/><path d="M419.6 298.1 L450.2 288.2" stroke="#94602e" stroke-width="0.73" opacity="0.38"/><path d="M246.7 316.6 L343.1 282.2" stroke="#b0773f" stroke-width="0.84" opacity="0.38"/><path d="M411.2 278.3 L516.0 241.2" stroke="#b0773f" stroke-width="0.72" opacity="0.35"/><path d="M380.5 297.2 L443.1 276.1" stroke="#a06a36" stroke-width="0.75" opacity="0.29"/><path d="M265.9 326.9 L300.3 315.2" stroke="#94602e" stroke-width="0.45" opacity="0.29"/><path d="M222.7 325.1 L340.2 283.5" stroke="#a06a36" stroke-width="0.63" opacity="0.49"/><path d="M310.3 297.9 L420.3 259.9" stroke="#e2ad78" stroke-width="0.57" opacity="0.29"/><path d="M209.0 354.3 L358.6 301.3" stroke="#dba36a" stroke-width="0.45" opacity="0.22"/><path d="M416.2 267.3 L516.7 232.1" stroke="#b0773f" stroke-width="0.89" opacity="0.43"/><path d="M316.1 315.2 L394.4 288.5" stroke="#a06a36" stroke-width="0.53" opacity="0.49"/><path d="M417.9 274.6 L562.4 223.6" stroke="#94602e" stroke-width="0.90" opacity="0.38"/><path d="M357.9 279.3 L402.7 263.6" stroke="#a06a36" stroke-width="0.79" opacity="0.30"/><path d="M283.5 307.3 L320.7 294.4" stroke="#b0773f" stroke-width="0.41" opacity="0.31"/><path d="M369.9 280.4 L474.2 244.5" stroke="#b0773f" stroke-width="0.83" opacity="0.25"/><path d="M245.8 372.3 L381.2 324.5" stroke="#b0773f" stroke-width="0.48" opacity="0.39"/><path d="M351.8 321.5 L429.2 294.3" stroke="#a06a36" stroke-width="0.61" opacity="0.23"/><path d="M215.3 386.3 L272.4 366.7" stroke="#e2ad78" stroke-width="0.61" opacity="0.47"/><path d="M335.1 317.0 L485.6 265.1" stroke="#b0773f" stroke-width="0.51" opacity="0.37"/><path d="M430.9 289.3 L493.7 268.0" stroke="#b0773f" stroke-width="0.77" opacity="0.22"/><path d="M314.0 307.5 L345.3 296.2" stroke="#b98248" stroke-width="0.69" opacity="0.24"/><path d="M301.0 351.9 L458.3 297.1" stroke="#dba36a" stroke-width="0.66" opacity="0.48"/><path d="M361.3 332.8 L450.4 301.4" stroke="#e2ad78" stroke-width="0.88" opacity="0.21"/><path d="M373.6 301.1 L497.2 257.6" stroke="#a06a36" stroke-width="0.44" opacity="0.36"/><path d="M400.3 317.7 L524.8 274.5" stroke="#e2ad78" stroke-width="0.58" opacity="0.41"/><path d="M443.7 300.7 L525.0 272.7" stroke="#94602e" stroke-width="0.69" opacity="0.39"/><path d="M306.3 330.9 L413.5 292.7" stroke="#dba36a" stroke-width="0.46" opacity="0.28"/><path d="M315.3 312.1 L466.4 259.5" stroke="#94602e" stroke-width="0.62" opacity="0.45"/><path d="M227.2 369.0 L256.2 359.0" stroke="#94602e" stroke-width="0.41" opacity="0.49"/><path d="M234.9 368.1 L349.0 328.2" stroke="#a06a36" stroke-width="0.58" opacity="0.24"/><path d="M367.1 305.6 L493.9 261.0" stroke="#94602e" stroke-width="0.65" opacity="0.27"/><path d="M312.3 308.2 L422.9 270.0" stroke="#b0773f" stroke-width="0.84" opacity="0.32"/><path d="M359.5 295.8 L402.9 280.6" stroke="#a06a36" stroke-width="0.76" opacity="0.49"/><path d="M278.4 315.1 L364.2 284.7" stroke="#b0773f" stroke-width="0.82" opacity="0.31"/><path d="M342.8 323.7 L464.5 281.6" stroke="#b98248" stroke-width="0.63" opacity="0.22"/><path d="M213.3 381.4 L243.9 371.1" stroke="#b98248" stroke-width="0.58" opacity="0.39"/><path d="M354.5 317.7 L434.2 289.3" stroke="#e2ad78" stroke-width="0.52" opacity="0.24"/><path d="M217.4 364.9 L302.7 335.3" stroke="#dba36a" stroke-width="0.72" opacity="0.31"/><path d="M225.7 335.3 L361.9 287.2" stroke="#dba36a" stroke-width="0.41" opacity="0.34"/><path d="M394.3 275.1 L456.0 253.2" stroke="#dba36a" stroke-width="0.87" opacity="0.35"/><path d="M469.2 247.7 L608.7 199.1" stroke="#b0773f" stroke-width="0.44" opacity="0.48"/><path d="M396.4 271.3 L482.7 241.3" stroke="#a06a36" stroke-width="0.59" opacity="0.37"/><path d="M438.0 298.1 L590.5 244.7" stroke="#dba36a" stroke-width="0.89" opacity="0.23"/><path d="M434.5 299.4 L584.3 246.4" stroke="#b0773f" stroke-width="0.85" opacity="0.49"/><path d="M464.0 272.9 L595.8 226.5" stroke="#dba36a" stroke-width="0.83" opacity="0.30"/><path d="M226.9 349.9 L326.2 315.6" stroke="#94602e" stroke-width="0.86" opacity="0.27"/><path d="M434.9 276.4 L464.6 266.0" stroke="#dba36a" stroke-width="0.79" opacity="0.24"/><path d="M244.4 348.5 L367.1 306.1" stroke="#dba36a" stroke-width="0.62" opacity="0.46"/><path d="M358.4 319.3 L485.7 274.6" stroke="#b98248" stroke-width="0.55" opacity="0.42"/><path d="M374.3 303.4 L513.2 254.9" stroke="#e2ad78" stroke-width="0.74" opacity="0.49"/><path d="M435.6 287.3 L501.7 263.6" stroke="#b98248" stroke-width="0.66" opacity="0.37"/><path d="M258.3 344.8 L351.2 312.5" stroke="#a06a36" stroke-width="0.67" opacity="0.21"/><path d="M448.1 278.9 L606.7 222.8" stroke="#a06a36" stroke-width="0.75" opacity="0.22"/><path d="M347.8 305.9 L501.9 252.7" stroke="#e2ad78" stroke-width="0.52" opacity="0.35"/><path d="M295.0 354.6 L446.3 302.3" stroke="#b98248" stroke-width="0.56" opacity="0.26"/><path d="M368.7 330.3 L411.2 315.9" stroke="#a06a36" stroke-width="0.42" opacity="0.25"/><path d="M208.1 346.8 L330.8 303.4" stroke="#94602e" stroke-width="0.45" opacity="0.42"/><path d="M237.5 350.5 L296.4 329.4" stroke="#b98248" stroke-width="0.84" opacity="0.21"/><path d="M372.7 322.7 L480.9 284.9" stroke="#dba36a" stroke-width="0.67" opacity="0.27"/><path d="M262.3 343.9 L366.5 306.8" stroke="#dba36a" stroke-width="0.71" opacity="0.30"/><path d="M253.0 350.8 L398.2 299.5" stroke="#b0773f" stroke-width="0.84" opacity="0.24"/><path d="M268.4 353.1 L328.5 331.4" stroke="#94602e" stroke-width="0.67" opacity="0.41"/><path d="M258.2 350.6 L391.0 303.4" stroke="#b98248" stroke-width="0.74" opacity="0.47"/><path d="M461.6 247.6 L554.9 215.4" stroke="#b98248" stroke-width="0.90" opacity="0.45"/><path d="M417.8 285.7 L446.0 276.2" stroke="#b98248" stroke-width="0.66" opacity="0.37"/><path d="M243.8 328.1 L296.4 310.3" stroke="#e2ad78" stroke-width="0.86" opacity="0.23"/><path d="M221.4 383.5 L308.8 353.3" stroke="#e2ad78" stroke-width="0.60" opacity="0.33"/><path d="M299.0 310.4 L374.3 284.2" stroke="#a06a36" stroke-width="0.82" opacity="0.25"/><path d="M325.3 334.0 L405.0 305.6" stroke="#b0773f" stroke-width="0.45" opacity="0.44"/><path d="M290.8 305.5 L429.4 257.6" stroke="#dba36a" stroke-width="0.87" opacity="0.37"/><path d="M255.6 348.8 L326.6 324.3" stroke="#e2ad78" stroke-width="0.86" opacity="0.42"/><path d="M411.2 308.6 L490.9 281.3" stroke="#b98248" stroke-width="0.75" opacity="0.43"/><path d="M407.8 284.4 L530.3 240.8" stroke="#e2ad78" stroke-width="0.55" opacity="0.23"/><path d="M440.3 309.3 L587.2 257.2" stroke="#e2ad78" stroke-width="0.87" opacity="0.40"/><path d="M294.5 339.8 L396.4 304.2" stroke="#94602e" stroke-width="0.66" opacity="0.35"/><path d="M261.5 317.9 L339.9 290.6" stroke="#a06a36" stroke-width="0.71" opacity="0.42"/><path d="M273.0 331.3 L304.8 319.7" stroke="#94602e" stroke-width="0.41" opacity="0.28"/><path d="M278.1 325.8 L376.0 291.4" stroke="#b98248" stroke-width="0.68" opacity="0.50"/><path d="M374.1 321.3 L409.4 309.1" stroke="#a06a36" stroke-width="0.59" opacity="0.48"/><path d="M307.3 354.6 L447.8 305.5" stroke="#b98248" stroke-width="0.43" opacity="0.48"/><path d="M316.5 323.9 L422.2 286.7" stroke="#e2ad78" stroke-width="0.64" opacity="0.28"/><path d="M451.3 285.2 L577.3 240.3" stroke="#b0773f" stroke-width="0.69" opacity="0.39"/><path d="M313.3 334.8 L345.5 323.2" stroke="#94602e" stroke-width="0.43" opacity="0.50"/><path d="M455.3 247.2 L602.5 195.6" stroke="#94602e" stroke-width="0.53" opacity="0.43"/><path d="M217.0 332.1 L351.4 285.8" stroke="#b0773f" stroke-width="0.89" opacity="0.45"/><path d="M365.0 281.4 L474.2 243.1" stroke="#b0773f" stroke-width="0.83" opacity="0.31"/><path d="M246.0 338.4 L289.9 322.9" stroke="#b98248" stroke-width="0.53" opacity="0.37"/><path d="M316.2 339.6 L412.8 306.5" stroke="#e2ad78" stroke-width="0.77" opacity="0.27"/><path d="M235.2 375.0 L366.1 329.4" stroke="#e2ad78" stroke-width="0.54" opacity="0.38"/><path d="M397.1 306.3 L447.8 288.3" stroke="#b0773f" stroke-width="0.49" opacity="0.27"/><path d="M464.6 296.2 L608.3 245.1" stroke="#a06a36" stroke-width="0.40" opacity="0.28"/><path d="M212.1 330.1 L267.2 310.5" stroke="#a06a36" stroke-width="0.86" opacity="0.25"/><path d="M267.2 369.3 L357.6 337.5" stroke="#e2ad78" stroke-width="0.57" opacity="0.42"/><path d="M427.2 257.1 L468.4 243.2" stroke="#b98248" stroke-width="0.82" opacity="0.43"/><path d="M322.7 335.4 L400.4 307.6" stroke="#b0773f" stroke-width="0.73" opacity="0.50"/><path d="M291.2 334.1 L417.0 290.8" stroke="#94602e" stroke-width="0.73" opacity="0.37"/><path d="M327.4 307.5 L425.8 273.0" stroke="#b98248" stroke-width="0.64" opacity="0.41"/><path d="M284.2 350.6 L319.5 337.8" stroke="#dba36a" stroke-width="0.70" opacity="0.41"/><path d="M336.1 331.7 L405.4 308.1" stroke="#b0773f" stroke-width="0.58" opacity="0.42"/><path d="M302.1 303.5 L422.8 261.4" stroke="#dba36a" stroke-width="0.86" opacity="0.33"/><path d="M417.8 274.7 L485.7 250.7" stroke="#dba36a" stroke-width="0.85" opacity="0.27"/><path d="M300.8 319.4 L374.9 293.3" stroke="#94602e" stroke-width="0.80" opacity="0.42"/><path d="M302.6 320.3 L348.5 304.4" stroke="#b0773f" stroke-width="0.49" opacity="0.43"/><path d="M438.4 266.0 L466.4 256.2" stroke="#b98248" stroke-width="0.48" opacity="0.29"/><path d="M210.9 380.4 L293.0 351.8" stroke="#e2ad78" stroke-width="0.79" opacity="0.23"/><path d="M226.6 368.4 L373.0 316.5" stroke="#dba36a" stroke-width="0.73" opacity="0.23"/><path d="M421.3 280.7 L542.5 238.3" stroke="#b98248" stroke-width="0.57" opacity="0.34"/><path d="M297.9 347.8 L367.8 322.7" stroke="#94602e" stroke-width="0.67" opacity="0.42"/><path d="M392.7 321.3 L473.1 293.7" stroke="#dba36a" stroke-width="0.57" opacity="0.20"/><path d="M305.2 300.7 L392.9 270.1" stroke="#a06a36" stroke-width="0.66" opacity="0.41"/><path d="M417.6 282.0 L499.4 252.8" stroke="#dba36a" stroke-width="0.48" opacity="0.39"/><path d="M386.3 286.7 L463.8 259.6" stroke="#e2ad78" stroke-width="0.88" opacity="0.22"/><path d="M286.7 308.8 L399.2 269.8" stroke="#b0773f" stroke-width="0.86" opacity="0.43"/><path d="M209.6 358.5 L342.6 311.6" stroke="#b0773f" stroke-width="0.49" opacity="0.27"/><path d="M267.4 352.9 L372.7 315.6" stroke="#b0773f" stroke-width="0.85" opacity="0.32"/><path d="M446.3 303.9 L555.9 266.2" stroke="#b98248" stroke-width="0.64" opacity="0.28"/><path d="M440.2 304.6 L511.3 279.8" stroke="#a06a36" stroke-width="0.64" opacity="0.27"/><path d="M218.2 384.4 L351.4 337.6" stroke="#b98248" stroke-width="0.80" opacity="0.43"/><path d="M413.7 260.8 L563.5 209.0" stroke="#94602e" stroke-width="0.85" opacity="0.34"/><path d="M270.3 333.5 L413.4 283.3" stroke="#e2ad78" stroke-width="0.47" opacity="0.47"/><path d="M419.7 263.3 L544.8 219.6" stroke="#b98248" stroke-width="0.67" opacity="0.25"/><path d="M409.2 258.9 L545.0 211.9" stroke="#b0773f" stroke-width="0.44" opacity="0.28"/><path d="M394.9 269.8 L484.7 238.3" stroke="#dba36a" stroke-width="0.69" opacity="0.46"/><path d="M285.5 351.0 L366.7 323.2" stroke="#a06a36" stroke-width="0.79" opacity="0.33"/><path d="M214.9 352.4 L306.6 321.0" stroke="#e2ad78" stroke-width="0.56" opacity="0.32"/><path d="M352.4 340.5 L467.5 299.5" stroke="#a06a36" stroke-width="0.74" opacity="0.23"/><path d="M309.5 322.3 L465.0 268.4" stroke="#dba36a" stroke-width="0.62" opacity="0.46"/><path d="M393.6 293.7 L458.2 270.5" stroke="#a06a36" stroke-width="0.83" opacity="0.45"/><path d="M395.6 319.4 L441.1 303.7" stroke="#b98248" stroke-width="0.77" opacity="0.49"/><path d="M405.1 294.7 L441.8 281.3" stroke="#94602e" stroke-width="0.77" opacity="0.30"/><path d="M455.4 277.5 L578.1 234.3" stroke="#94602e" stroke-width="0.45" opacity="0.24"/><path d="M230.0 363.5 L350.6 320.8" stroke="#94602e" stroke-width="0.42" opacity="0.34"/><path d="M391.5 271.2 L420.9 261.7" stroke="#94602e" stroke-width="0.60" opacity="0.22"/><path d="M449.0 271.3 L543.0 238.7" stroke="#b0773f" stroke-width="0.81" opacity="0.32"/><path d="M292.8 325.1 L319.9 315.4" stroke="#dba36a" stroke-width="0.56" opacity="0.44"/><path d="M269.9 368.6 L366.5 334.5" stroke="#b0773f" stroke-width="0.57" opacity="0.40"/><path d="M233.2 343.8 L326.9 311.4" stroke="#a06a36" stroke-width="0.71" opacity="0.25"/><path d="M408.1 315.1 L507.1 280.3" stroke="#b98248" stroke-width="0.66" opacity="0.37"/><path d="M257.5 369.7 L417.3 314.2" stroke="#b0773f" stroke-width="0.68" opacity="0.21"/><path d="M379.8 317.2 L423.1 302.0" stroke="#94602e" stroke-width="0.75" opacity="0.30"/><path d="M451.2 266.5 L538.7 235.2" stroke="#dba36a" stroke-width="0.47" opacity="0.47"/><path d="M349.0 314.6 L449.7 279.0" stroke="#dba36a" stroke-width="0.90" opacity="0.45"/><path d="M364.4 282.1 L500.7 234.0" stroke="#e2ad78" stroke-width="0.52" opacity="0.37"/><path d="M425.2 264.7 L524.1 229.4" stroke="#a06a36" stroke-width="0.60" opacity="0.43"/><path d="M451.4 305.9 L495.1 291.1" stroke="#dba36a" stroke-width="0.85" opacity="0.38"/><path d="M374.7 318.2 L421.1 301.8" stroke="#a06a36" stroke-width="0.47" opacity="0.32"/><path d="M355.9 288.2 L451.1 254.5" stroke="#b98248" stroke-width="0.87" opacity="0.22"/><path d="M412.8 302.3 L544.1 256.2" stroke="#94602e" stroke-width="0.70" opacity="0.34"/><path d="M314.0 330.8 L432.1 289.9" stroke="#e2ad78" stroke-width="0.64" opacity="0.50"/><path d="M219.5 344.3 C219.6 341.5 219.3 342.6 220.3 339.5 C221.3 336.4 220.6 338.0 222.4 335.1 C224.2 332.2 223.1 333.4 225.8 330.8 C228.5 328.2 226.8 329.8 230.4 327.2 C234.0 324.6 232.1 325.6 236.5 323.0 C240.9 320.4 238.0 321.9 243.5 319.4 C249.0 316.9 246.4 318.0 253.0 315.5 C259.6 313.0 247.6 317.3 263.3 311.8 C279.0 306.3 274.4 307.9 300.0 299.0 C325.6 290.1 310.0 295.5 340.0 285.0 C370.0 274.5 362.2 277.1 390.0 267.6 C417.8 258.1 409.8 260.9 423.5 256.6 C437.2 252.3 425.9 255.7 431.0 254.6 C436.1 253.5 434.4 253.9 438.7 253.3 C443.0 252.7 440.5 253.0 444.0 252.8 C447.5 252.6 446.0 252.7 449.3 252.8 C452.6 252.9 450.9 252.7 454.0 253.2 C457.1 253.7 455.4 253.3 458.6 254.2 C461.8 255.1 460.4 254.5 463.5 256.0 C466.6 257.5 465.1 256.7 468.0 258.6 C470.9 260.5 469.5 259.5 472.2 261.8 C474.9 264.1 473.5 262.7 476.2 265.5 C478.9 268.3 477.7 267.0 480.4 270.3 C483.1 273.6 481.9 272.1 484.4 275.5 C486.9 278.9 485.6 277.0 488.0 280.5 C490.4 284.0 489.5 282.7 491.5 286.0 C493.5 289.3 492.4 287.4 494.0 290.5 C495.6 293.6 494.9 292.1 496.2 295.4 C497.5 298.7 496.9 297.0 497.8 300.5 C498.7 304.0 498.4 303.2 498.9 306.0 C499.4 308.8 499.1 307.0 499.2 309.0 C499.3 311.0 499.3 309.8 499.1 312.0 C498.9 314.2 499.1 313.2 498.6 315.5 C498.1 317.8 498.3 316.5 497.7 319.0 C497.1 321.5 497.1 323.1 496.7 323.1 C496.3 323.1 496.8 321.7 496.6 319.0 C496.4 316.3 496.6 317.4 496.2 314.9 C495.8 312.4 496.1 313.7 495.4 311.5 C494.7 309.3 495.3 310.4 494.1 308.2 C492.9 306.0 493.5 306.9 491.8 304.9 C490.1 302.9 491.3 303.8 489.0 302.1 C486.7 300.4 487.7 301.1 485.0 299.8 C482.3 298.5 483.5 299.0 480.8 298.3 C478.1 297.6 479.5 297.9 476.8 297.6 C474.1 297.3 475.3 297.3 472.7 297.4 C470.1 297.5 471.4 297.4 469.0 297.8 C466.6 298.2 468.9 297.7 465.4 298.5 C461.9 299.3 463.7 298.8 458.6 300.3 C453.5 301.8 457.1 300.7 450.0 303.1 C442.9 305.5 447.2 303.9 437.2 307.4 C427.2 310.9 439.1 306.9 420.0 313.6 C400.9 320.3 406.7 318.2 380.0 327.6 C353.3 337.0 366.7 332.4 340.0 341.9 C313.3 351.4 316.7 350.2 300.0 356.2 C283.3 362.2 296.3 357.6 290.0 359.8 C283.7 362.0 286.4 361.0 281.0 362.8 C275.6 364.6 278.9 363.6 273.9 365.2 C268.9 366.8 270.8 366.4 266.0 367.6 C261.2 368.8 263.9 368.4 259.4 368.9 C254.9 369.4 256.9 369.3 252.5 369.2 C248.1 369.1 250.4 369.2 246.2 368.5 C242.0 367.8 244.0 368.2 240.0 367.0 C236.0 365.8 237.6 366.4 234.3 364.8 C231.0 363.2 232.6 364.1 230.0 362.3 C227.4 360.5 228.6 361.5 226.4 359.3 C224.2 357.1 225.2 358.3 223.4 355.8 C221.6 353.3 222.3 354.4 221.1 351.8 C219.9 349.2 220.4 350.5 219.9 348.0 C219.4 345.5 219.4 347.1 219.5 344.3 Z" fill="url(#woodlit)"/><path d="M452 252 C466 255 476 264 485 276 C492 286 497 297 498.5 308 C498.8 314 498 319 496.7 324" fill="none" stroke="#6b3f1c" stroke-width="7" opacity="0.5" filter="url(#bl1)"/><path d="M470 262 C480 272 490 288 494 300 C495.5 306 496.5 312 496.5 320" fill="none" stroke="#5a3416" stroke-width="3" opacity="0.45" filter="url(#bl1)"/><path d="M225 330 L263 311.5 L300 298.5 L423 256.5 L445 252.5" fill="none" stroke="#8a5726" stroke-width="2.5" opacity="0.35" filter="url(#bl1)"/><path d="M219 343 C219 350 222 358 230 363 C238 368 250 371 262 369.5 L300 356.5 L300 359 L262 372 L226 366 L216 350 Z" fill="#7a4a22" opacity="0.45" filter="url(#bl1)"/></g><g transform="translate(314.5 316.2) rotate(-18.2)"><rect x="-73.5" y="-11.3" width="147" height="22.6" rx="11.3" fill="#3a3a3a"/><rect x="-72.7" y="-10.5" width="145.4" height="21" rx="10.5" fill="#202020"/><ellipse cx="-57.5" cy="0.3" rx="11" ry="8.3" fill="#e4e4e4"/><ellipse cx="-57.5" cy="0.3" rx="11" ry="8.3" fill="none" stroke="#fafafa" stroke-width="0.8"/><path d="M-61 -4 L-52.2 0.3 L-61 4.6 Z" fill="#151515"/><ellipse cx="57" cy="-0.8" rx="10" ry="8.2" fill="#3150d4"/><path d="M53.6 -3.6 L60 2 L56.8 4.6 L56.8 -6.2 L60 -3.6 L53.6 2" fill="none" stroke="#fff" stroke-width="1" stroke-linejoin="round"/><text x="-1" y="-1.2" text-anchor="middle" font-family="Liberation Sans, sans-serif" font-weight="bold" font-size="7.6" fill="#ffffff" textLength="67" lengthAdjust="spacingAndGlyphs">Drawing Airplanes</text><text x="-2" y="5.6" text-anchor="middle" font-family="Liberation Sans, sans-serif" font-size="5.8" fill="#8e8e8e" textLength="36" lengthAdjust="spacingAndGlyphs">Many Worlds</text><path d="M-14 9.2 H28" stroke="#5a5a5a" stroke-width="0.5"/><path d="M-36 9.2 H-14" stroke="#cfcfcf" stroke-width="0.6"/><circle cx="-14.5" cy="9.2" r="1.5" fill="#f2f2f2"/></g><path d="M560 428 L612 440 L700 410 L790 375 L805 355 L815 362 L800 390 L700 428 L610 455 L566 445 Z" fill="#888" opacity="0.2" filter="url(#bl6)"/><path d="M790 322 L812 312 L822 300 L828 310 L815 330 L796 345 Z" fill="#999" opacity="0.15" filter="url(#bl6)"/><path d="M541.2 374.7 C542 366 545 358.5 549.9 352.3 C555 345.5 560 339 567.4 333.6 C575 328.5 583 324.5 592.3 321.1 L629.7 308.7 L670 296.1 L719.9 279.9 L752.3 270.4 C760 268.6 767 268 774.7 268.7 C782 269.5 789 271 794.6 273.7 C800 276.5 804 279.5 807.1 283.6 C810.5 288 812.3 291.5 812.6 296.1 C812.8 300.5 812.2 304 810.8 307.3 C808.5 311 805 313.5 799.6 316 L790 320.2 L775 325.4 C781 328.5 786.5 333.5 790.5 339.5 C794 344 795.3 348 795.5 352.8 C795.7 356.5 795.5 359.5 794.7 362.2 C793.3 365.5 790.5 368 786.9 370 L733.8 390.3 L700 402.4 L660.3 417.6 L654.6 420.8 L612.3 434.5 C604 436 597 436 589.8 435 C583 433.8 577.5 432 572.4 429.6 C566.5 426.5 561.5 423.5 557.4 419.6 C551.5 413.5 547.5 407 545 399.6 C542.5 391.5 541 383 541.2 374.7 Z" fill="url(#blk)"/><path d="M583.6 415.8 C583.8 411.5 585 408 587.3 404.6 C590 400.5 593 397.5 597.3 394.7 C602.5 391 608 387.8 614.7 384.7 L640 370.8 L707.2 349.7 L774.4 327 C780 331 784 335.5 786.9 340.3 C789.5 344 791.5 347.5 792.3 351.3 C792.8 355 792 359 790 362.2 C788 365 785 367 780.6 368.4 L733.8 384.8 L699.4 395 L640 413.8 L612.3 423.5 C606 425.2 600 425.8 594.8 425.6 C590.5 425 587.5 423.5 586 421.3 C584.5 419.5 583.7 418 583.6 415.8 Z" fill="url(#baseg)"/><clipPath id="iclip"><path d="M583.6 415.8 C583.8 411.5 585 408 587.3 404.6 C590 400.5 593 397.5 597.3 394.7 C602.5 391 608 387.8 614.7 384.7 L640 370.8 L707.2 349.7 L774.4 327 C780 331 784 335.5 786.9 340.3 C789.5 344 791.5 347.5 792.3 351.3 C792.8 355 792 359 790 362.2 C788 365 785 367 780.6 368.4 L733.8 384.8 L699.4 395 L640 413.8 L612.3 423.5 C606 425.2 600 425.8 594.8 425.6 C590.5 425 587.5 423.5 586 421.3 C584.5 419.5 583.7 418 583.6 415.8 Z"/></clipPath><g clip-path="url(#iclip)"><path d="M575 440 L575 380 L681.4 352 L673.6 410 Z" fill="url(#mesh)"/><path d="M575 440 L575 380 L625 368 L596 440 Z" fill="#000" opacity="0.10" filter="url(#bl3)"/><path d="M681.4 352 L707.2 345 L699.4 400 L673.6 410 Z" fill="#dfdfdf"/><path d="M707.2 345 L712 345 L703 400 L699.4 400 Z" fill="#c6c6c6" opacity="0.7" filter="url(#bl1)"/><path d="M583 416 L600 392 L640 371 L707 350 L790 320 L790 326 L707 356 L640 378 L604 398 L590 420 Z" fill="#000" opacity="0.16" filter="url(#bl1)"/></g><path d="M541.2 374.7 C542 366 545 358.5 549.9 352.3 C555 345.5 560 339 567.4 333.6 C575 328.5 583 324.5 592.3 321.1 L629.7 308.7 L670 296.1 L719.9 279.9 L752.3 270.4 C760 268.6 767 268 774.7 268.7 C782 269.5 789 271 794.6 273.7 C800 276.5 804 279.5 807.1 283.6 C810.5 288 812.3 291.5 812.6 296.1 C812.8 300.5 812.2 304 810.8 307.3 C808.5 311 805 313.5 799.6 316 L790 320 L707.2 349.7 L640 370.8 L614.7 384.7 C608 387.8 602.5 391 597.3 394.7 C593 397.5 590 400.5 587.3 404.6 C585 408 583.8 411.5 583.6 415.8 C583.7 420 584.5 424 586 427 L572.4 429.6 C566.5 426.5 561.5 423.5 557.4 419.6 C551.5 413.5 547.5 407 545 399.6 C542.5 391.5 541 383 541.2 374.7 Z" fill="url(#blk)"/><path d="M560 345 C570 335 585 327 600 322 L752 273 C770 269 790 272 800 280 L640 335 C600 350 575 365 560 390 C552 375 553 358 560 345 Z" fill="#fff" opacity="0.015"/></g></svg>
</body></html>
